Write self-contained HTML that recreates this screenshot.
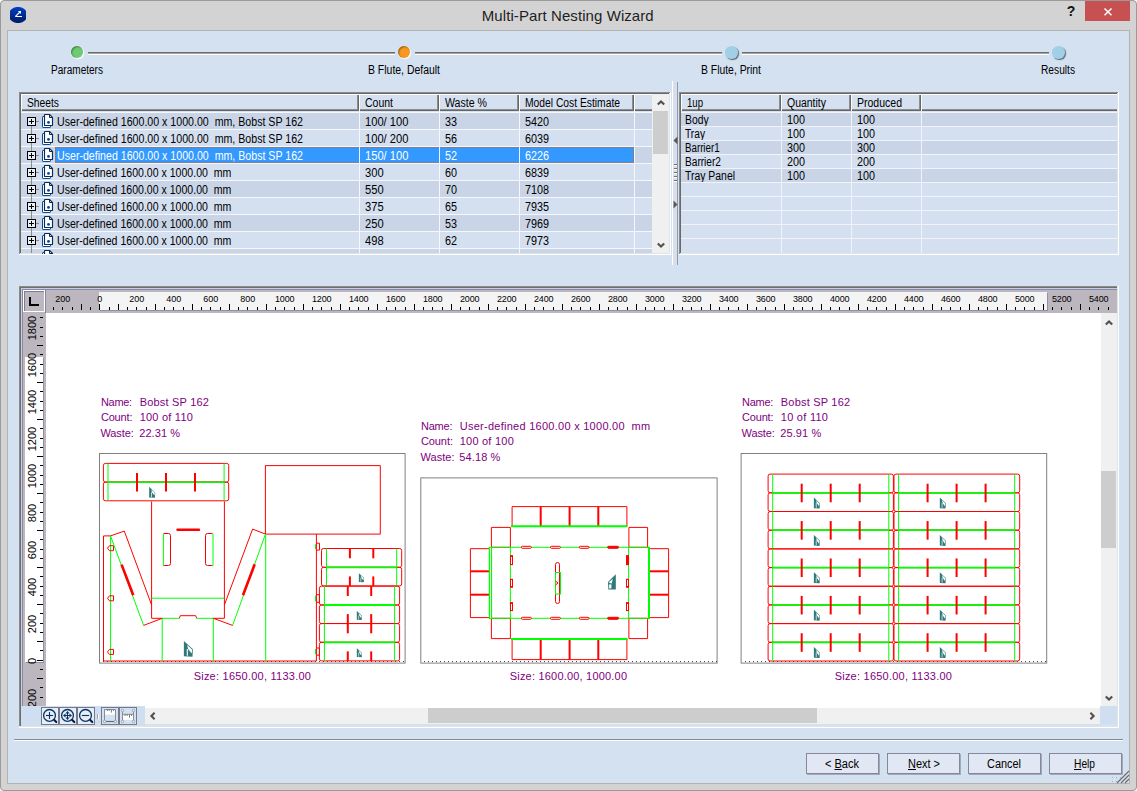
<!DOCTYPE html>
<html><head><meta charset="utf-8"><title>Multi-Part Nesting Wizard</title>
<style>
html,body{margin:0;padding:0}
body{width:1137px;height:791px;position:relative;overflow:hidden;background:#fff;font:11px 'Liberation Sans', sans-serif;}
div{box-sizing:border-box}
u{text-decoration:underline;text-underline-offset:1px}
svg{position:absolute;overflow:visible}
</style></head><body>
<div style="position:absolute;left:0;top:0;width:1137px;height:791px;background:#d3d3d3;border:1px solid #9a9a9a;border-radius:4px"></div>
<div style="position:absolute;left:7px;top:30px;width:1123px;height:754px;background:#b2b2b2;"></div>
<div style="position:absolute;left:8px;top:31px;width:1121px;height:752px;background:#D3E1F0;"></div>
<div style="position:absolute;left:481.80px;top:0.80px;font:normal 15px/30px 'Liberation Sans', sans-serif;color:#1e1e1e;white-space:pre;letter-spacing:0.078px;">Multi-Part Nesting Wizard</div>
<svg style="left:10px;top:7px;overflow:hidden" width="16" height="16" viewBox="0 0 16 16"><defs><linearGradient id="ig" x1="0" y1="0" x2="0" y2="1"><stop offset="0" stop-color="#0040c4"/><stop offset="1" stop-color="#001a66"/></linearGradient></defs><ellipse cx="8" cy="8" rx="9.3" ry="8.1" fill="url(#ig)"/><path d="M5.2 9.5 L12 9.5 M5.4 9.4 L10 5" stroke="#fff" stroke-width="1.1" fill="none"/><path d="M7.9 4.1 L11 3.9 L10.9 6.9 Z" fill="#fff"/></svg>
<div style="position:absolute;left:1066.72px;top:-2.65px;font:bold 14px/28px 'Liberation Sans', sans-serif;color:#111;white-space:pre;">?</div>
<div style="position:absolute;left:1085px;top:1px;width:45px;height:20px;background:#c75050;"></div>
<svg style="left:1104px;top:7.9px" width="8" height="8" viewBox="0 0 8 8"><path d="M0.5 0.5 L7.5 7.3 M7.5 0.5 L0.5 7.3" stroke="#fff" stroke-width="1.5" fill="none"/></svg>
<div style="position:absolute;left:71px;top:46px;width:12.2px;height:12.2px;border-radius:50%;background:#6dcb72;box-shadow:inset 1px 1px 1.5px rgba(0,0,0,.38), 1px 1px 1.5px rgba(255,255,255,1), 0 0 2px rgba(235,244,255,.9)"></div>
<div style="position:absolute;left:51.00px;top:57.84px;font:normal 12px/24px 'Liberation Sans', sans-serif;color:#000;white-space:pre;transform:scaleX(0.8383);transform-origin:0 0;">Parameters</div>
<div style="position:absolute;left:88px;top:52px;width:307px;height:1px;background:#6c6c6c;"></div>
<div style="position:absolute;left:88px;top:53px;width:307px;height:1px;background:#a4a4a4;"></div>
<div style="position:absolute;left:88px;top:54px;width:307px;height:1px;background:#ffffff;"></div>
<div style="position:absolute;left:398px;top:46px;width:12.2px;height:12.2px;border-radius:50%;background:#f8981f;box-shadow:inset 1px 1px 1.5px rgba(0,0,0,.38), 1px 1px 1.5px rgba(255,255,255,1), 0 0 2px rgba(235,244,255,.9)"></div>
<div style="position:absolute;left:368.00px;top:57.84px;font:normal 12px/24px 'Liberation Sans', sans-serif;color:#000;white-space:pre;transform:scaleX(0.8704);transform-origin:0 0;">B Flute, Default</div>
<div style="position:absolute;left:415px;top:52px;width:307px;height:1px;background:#6c6c6c;"></div>
<div style="position:absolute;left:415px;top:53px;width:307px;height:1px;background:#a4a4a4;"></div>
<div style="position:absolute;left:415px;top:54px;width:307px;height:1px;background:#ffffff;"></div>
<div style="position:absolute;left:725.2px;top:46.2px;width:12.4px;height:12.4px;border-radius:50%;background:#a0cfe6;box-shadow:1px 1px 1px rgba(50,60,70,.75), 0 0 2px rgba(225,238,250,.9)"></div>
<div style="position:absolute;left:701.00px;top:57.84px;font:normal 12px/24px 'Liberation Sans', sans-serif;color:#000;white-space:pre;transform:scaleX(0.8651);transform-origin:0 0;">B Flute, Print</div>
<div style="position:absolute;left:742px;top:52px;width:307px;height:1px;background:#6c6c6c;"></div>
<div style="position:absolute;left:742px;top:53px;width:307px;height:1px;background:#a4a4a4;"></div>
<div style="position:absolute;left:742px;top:54px;width:307px;height:1px;background:#ffffff;"></div>
<div style="position:absolute;left:1052.2px;top:46.2px;width:12.4px;height:12.4px;border-radius:50%;background:#a0cfe6;box-shadow:1px 1px 1px rgba(50,60,70,.75), 0 0 2px rgba(225,238,250,.9)"></div>
<div style="position:absolute;left:1041.00px;top:57.84px;font:normal 12px/24px 'Liberation Sans', sans-serif;color:#000;white-space:pre;transform:scaleX(0.8497);transform-origin:0 0;">Results</div>
<div style="position:absolute;left:19px;top:92px;width:652px;height:163px;background:#ffffff;"></div>
<div style="position:absolute;left:19px;top:92px;width:651px;height:162px;background:#8a8a8a;"></div>
<div style="position:absolute;left:20px;top:93px;width:650px;height:161px;background:#e3e3e3;"></div>
<div style="position:absolute;left:20px;top:93px;width:649px;height:160px;background:#696969;"></div>
<div style="position:absolute;left:21px;top:94px;width:648px;height:159px;background:#D3E1F0;"></div>
<div style="position:absolute;left:21px;top:94px;width:338px;height:17px;background:#ffffff;"></div>
<div style="position:absolute;left:22px;top:95px;width:337px;height:16px;background:#666666;"></div>
<div style="position:absolute;left:22px;top:95px;width:336px;height:15px;background:#8e8e8e;"></div>
<div style="position:absolute;left:22px;top:95px;width:335px;height:14px;background:#d5e0f0;"></div>
<div style="position:absolute;left:27.00px;top:90.84px;font:normal 12px/24px 'Liberation Sans', sans-serif;color:#000;white-space:pre;transform:scaleX(0.8565);transform-origin:0 0;">Sheets</div>
<div style="position:absolute;left:359px;top:94px;width:80px;height:17px;background:#ffffff;"></div>
<div style="position:absolute;left:360px;top:95px;width:79px;height:16px;background:#666666;"></div>
<div style="position:absolute;left:360px;top:95px;width:78px;height:15px;background:#8e8e8e;"></div>
<div style="position:absolute;left:360px;top:95px;width:77px;height:14px;background:#d5e0f0;"></div>
<div style="position:absolute;left:365.00px;top:90.84px;font:normal 12px/24px 'Liberation Sans', sans-serif;color:#000;white-space:pre;transform:scaleX(0.8741);transform-origin:0 0;">Count</div>
<div style="position:absolute;left:439px;top:94px;width:80px;height:17px;background:#ffffff;"></div>
<div style="position:absolute;left:440px;top:95px;width:79px;height:16px;background:#666666;"></div>
<div style="position:absolute;left:440px;top:95px;width:78px;height:15px;background:#8e8e8e;"></div>
<div style="position:absolute;left:440px;top:95px;width:77px;height:14px;background:#d5e0f0;"></div>
<div style="position:absolute;left:445.00px;top:90.84px;font:normal 12px/24px 'Liberation Sans', sans-serif;color:#000;white-space:pre;transform:scaleX(0.8828);transform-origin:0 0;">Waste %</div>
<div style="position:absolute;left:519px;top:94px;width:115px;height:17px;background:#ffffff;"></div>
<div style="position:absolute;left:520px;top:95px;width:114px;height:16px;background:#666666;"></div>
<div style="position:absolute;left:520px;top:95px;width:113px;height:15px;background:#8e8e8e;"></div>
<div style="position:absolute;left:520px;top:95px;width:112px;height:14px;background:#d5e0f0;"></div>
<div style="position:absolute;left:525.00px;top:90.84px;font:normal 12px/24px 'Liberation Sans', sans-serif;color:#000;white-space:pre;transform:scaleX(0.8580);transform-origin:0 0;">Model Cost Estimate</div>
<div style="position:absolute;left:634px;top:94px;width:18px;height:17px;background:#ffffff;"></div>
<div style="position:absolute;left:635px;top:95px;width:17px;height:16px;background:#666666;"></div>
<div style="position:absolute;left:635px;top:95px;width:17px;height:15px;background:#8e8e8e;"></div>
<div style="position:absolute;left:635px;top:95px;width:17px;height:14px;background:#d5e0f0;"></div>
<div style="position:absolute;left:21px;top:111px;width:631px;height:1px;background:#d8e2f1;"></div>
<div style="position:absolute;left:21px;top:112px;width:631px;height:17px;background:#c9d5e7;"></div>
<div style="position:absolute;left:21px;top:112px;width:631px;height:1px;background:#f4f7fb;"></div>
<div style="position:absolute;left:31px;top:117px;width:1px;height:12px;background:#8c8c8c;"></div>
<div style="position:absolute;left:36px;top:121px;width:3px;height:1px;background:#8c8c8c;"></div>
<div style="position:absolute;left:27px;top:117px;width:9px;height:9px;border:1px solid #000;background:#e9eef7"></div>
<div style="position:absolute;left:29px;top:121px;width:5px;height:1px;background:#000;"></div>
<div style="position:absolute;left:31px;top:119px;width:1px;height:5px;background:#000;"></div>
<svg style="left:42px;top:114px" width="11" height="14" viewBox="0 0 11 14"><path d="M0.5 3.1 Q0.5 2.5 1.1 2.5 L8.5 2.5 L8.5 12.9 Q8.5 13.5 7.9 13.5 L1.1 13.5 Q0.5 13.5 0.5 12.9 Z" fill="#fff" stroke="#0b4a8c" stroke-width="1"/><path d="M2.5 1.1 Q2.5 0.5 3.1 0.5 L7.6 0.5 L10.5 3.4 L10.5 10.9 Q10.5 11.5 9.9 11.5 L3.1 11.5 Q2.5 11.5 2.5 10.9 Z" fill="#fff" stroke="#0a2a5a" stroke-width="1.15"/><path d="M7.5 0.5 L7.5 3.5 L10.5 3.5" fill="none" stroke="#0a2a5a" stroke-width="1"/><circle cx="6.5" cy="8.4" r="1.45" fill="#0a4690"/></svg>
<div style="position:absolute;left:56.60px;top:109.84px;font:normal 12px/24px 'Liberation Sans', sans-serif;color:#000;white-space:pre;transform:scaleX(0.8850);transform-origin:0 0;">User-defined 1600.00 x 1000.00  mm, Bobst SP 162</div>
<div style="position:absolute;left:364.50px;top:109.84px;font:normal 12px/24px 'Liberation Sans', sans-serif;color:#000;white-space:pre;transform:scaleX(0.9300);transform-origin:0 0;">100/ 100</div>
<div style="position:absolute;left:444.50px;top:109.84px;font:normal 12px/24px 'Liberation Sans', sans-serif;color:#000;white-space:pre;transform:scaleX(0.9000);transform-origin:0 0;">33</div>
<div style="position:absolute;left:524.50px;top:109.84px;font:normal 12px/24px 'Liberation Sans', sans-serif;color:#000;white-space:pre;transform:scaleX(0.9000);transform-origin:0 0;">5420</div>
<div style="position:absolute;left:21px;top:129px;width:631px;height:17px;background:#d4dff0;"></div>
<div style="position:absolute;left:21px;top:129px;width:631px;height:1px;background:#f4f7fb;"></div>
<div style="position:absolute;left:31px;top:129px;width:1px;height:17px;background:#8c8c8c;"></div>
<div style="position:absolute;left:36px;top:138px;width:3px;height:1px;background:#8c8c8c;"></div>
<div style="position:absolute;left:27px;top:134px;width:9px;height:9px;border:1px solid #000;background:#e9eef7"></div>
<div style="position:absolute;left:29px;top:138px;width:5px;height:1px;background:#000;"></div>
<div style="position:absolute;left:31px;top:136px;width:1px;height:5px;background:#000;"></div>
<svg style="left:42px;top:131px" width="11" height="14" viewBox="0 0 11 14"><path d="M0.5 3.1 Q0.5 2.5 1.1 2.5 L8.5 2.5 L8.5 12.9 Q8.5 13.5 7.9 13.5 L1.1 13.5 Q0.5 13.5 0.5 12.9 Z" fill="#fff" stroke="#0b4a8c" stroke-width="1"/><path d="M2.5 1.1 Q2.5 0.5 3.1 0.5 L7.6 0.5 L10.5 3.4 L10.5 10.9 Q10.5 11.5 9.9 11.5 L3.1 11.5 Q2.5 11.5 2.5 10.9 Z" fill="#fff" stroke="#0a2a5a" stroke-width="1.15"/><path d="M7.5 0.5 L7.5 3.5 L10.5 3.5" fill="none" stroke="#0a2a5a" stroke-width="1"/><circle cx="6.5" cy="8.4" r="1.45" fill="#0a4690"/></svg>
<div style="position:absolute;left:56.60px;top:126.84px;font:normal 12px/24px 'Liberation Sans', sans-serif;color:#000;white-space:pre;transform:scaleX(0.8850);transform-origin:0 0;">User-defined 1600.00 x 1000.00  mm, Bobst SP 162</div>
<div style="position:absolute;left:364.50px;top:126.84px;font:normal 12px/24px 'Liberation Sans', sans-serif;color:#000;white-space:pre;transform:scaleX(0.9300);transform-origin:0 0;">100/ 200</div>
<div style="position:absolute;left:444.50px;top:126.84px;font:normal 12px/24px 'Liberation Sans', sans-serif;color:#000;white-space:pre;transform:scaleX(0.9000);transform-origin:0 0;">56</div>
<div style="position:absolute;left:524.50px;top:126.84px;font:normal 12px/24px 'Liberation Sans', sans-serif;color:#000;white-space:pre;transform:scaleX(0.9000);transform-origin:0 0;">6039</div>
<div style="position:absolute;left:21px;top:146px;width:631px;height:17px;background:#c9d5e7;"></div>
<div style="position:absolute;left:21px;top:146px;width:631px;height:1px;background:#f4f7fb;"></div>
<div style="position:absolute;left:31px;top:146px;width:1px;height:17px;background:#8c8c8c;"></div>
<div style="position:absolute;left:36px;top:155px;width:3px;height:1px;background:#8c8c8c;"></div>
<div style="position:absolute;left:27px;top:151px;width:9px;height:9px;border:1px solid #000;background:#e9eef7"></div>
<div style="position:absolute;left:29px;top:155px;width:5px;height:1px;background:#000;"></div>
<div style="position:absolute;left:31px;top:153px;width:1px;height:5px;background:#000;"></div>
<svg style="left:42px;top:148px" width="11" height="14" viewBox="0 0 11 14"><path d="M0.5 3.1 Q0.5 2.5 1.1 2.5 L8.5 2.5 L8.5 12.9 Q8.5 13.5 7.9 13.5 L1.1 13.5 Q0.5 13.5 0.5 12.9 Z" fill="#fff" stroke="#0b4a8c" stroke-width="1"/><path d="M2.5 1.1 Q2.5 0.5 3.1 0.5 L7.6 0.5 L10.5 3.4 L10.5 10.9 Q10.5 11.5 9.9 11.5 L3.1 11.5 Q2.5 11.5 2.5 10.9 Z" fill="#fff" stroke="#0a2a5a" stroke-width="1.15"/><path d="M7.5 0.5 L7.5 3.5 L10.5 3.5" fill="none" stroke="#0a2a5a" stroke-width="1"/><circle cx="6.5" cy="8.4" r="1.45" fill="#0a4690"/></svg>
<div style="position:absolute;left:55px;top:147px;width:579px;height:16px;background:#3399ff;outline:1px dotted #d0641a;outline-offset:-1px"></div>
<div style="position:absolute;left:56.60px;top:143.84px;font:normal 12px/24px 'Liberation Sans', sans-serif;color:#fff;white-space:pre;transform:scaleX(0.8850);transform-origin:0 0;">User-defined 1600.00 x 1000.00  mm, Bobst SP 162</div>
<div style="position:absolute;left:364.50px;top:143.84px;font:normal 12px/24px 'Liberation Sans', sans-serif;color:#fff;white-space:pre;transform:scaleX(0.9300);transform-origin:0 0;">150/ 100</div>
<div style="position:absolute;left:444.50px;top:143.84px;font:normal 12px/24px 'Liberation Sans', sans-serif;color:#fff;white-space:pre;transform:scaleX(0.9000);transform-origin:0 0;">52</div>
<div style="position:absolute;left:524.50px;top:143.84px;font:normal 12px/24px 'Liberation Sans', sans-serif;color:#fff;white-space:pre;transform:scaleX(0.9000);transform-origin:0 0;">6226</div>
<div style="position:absolute;left:21px;top:163px;width:631px;height:17px;background:#d4dff0;"></div>
<div style="position:absolute;left:21px;top:163px;width:631px;height:1px;background:#f4f7fb;"></div>
<div style="position:absolute;left:31px;top:163px;width:1px;height:17px;background:#8c8c8c;"></div>
<div style="position:absolute;left:36px;top:172px;width:3px;height:1px;background:#8c8c8c;"></div>
<div style="position:absolute;left:27px;top:168px;width:9px;height:9px;border:1px solid #000;background:#e9eef7"></div>
<div style="position:absolute;left:29px;top:172px;width:5px;height:1px;background:#000;"></div>
<div style="position:absolute;left:31px;top:170px;width:1px;height:5px;background:#000;"></div>
<svg style="left:42px;top:165px" width="11" height="14" viewBox="0 0 11 14"><path d="M0.5 3.1 Q0.5 2.5 1.1 2.5 L8.5 2.5 L8.5 12.9 Q8.5 13.5 7.9 13.5 L1.1 13.5 Q0.5 13.5 0.5 12.9 Z" fill="#fff" stroke="#0b4a8c" stroke-width="1"/><path d="M2.5 1.1 Q2.5 0.5 3.1 0.5 L7.6 0.5 L10.5 3.4 L10.5 10.9 Q10.5 11.5 9.9 11.5 L3.1 11.5 Q2.5 11.5 2.5 10.9 Z" fill="#fff" stroke="#0a2a5a" stroke-width="1.15"/><path d="M7.5 0.5 L7.5 3.5 L10.5 3.5" fill="none" stroke="#0a2a5a" stroke-width="1"/><circle cx="6.5" cy="8.4" r="1.45" fill="#0a4690"/></svg>
<div style="position:absolute;left:56.60px;top:160.84px;font:normal 12px/24px 'Liberation Sans', sans-serif;color:#000;white-space:pre;transform:scaleX(0.8803);transform-origin:0 0;">User-defined 1600.00 x 1000.00  mm</div>
<div style="position:absolute;left:364.50px;top:160.84px;font:normal 12px/24px 'Liberation Sans', sans-serif;color:#000;white-space:pre;transform:scaleX(0.9300);transform-origin:0 0;">300</div>
<div style="position:absolute;left:444.50px;top:160.84px;font:normal 12px/24px 'Liberation Sans', sans-serif;color:#000;white-space:pre;transform:scaleX(0.9000);transform-origin:0 0;">60</div>
<div style="position:absolute;left:524.50px;top:160.84px;font:normal 12px/24px 'Liberation Sans', sans-serif;color:#000;white-space:pre;transform:scaleX(0.9000);transform-origin:0 0;">6839</div>
<div style="position:absolute;left:21px;top:180px;width:631px;height:17px;background:#c9d5e7;"></div>
<div style="position:absolute;left:21px;top:180px;width:631px;height:1px;background:#f4f7fb;"></div>
<div style="position:absolute;left:31px;top:180px;width:1px;height:17px;background:#8c8c8c;"></div>
<div style="position:absolute;left:36px;top:189px;width:3px;height:1px;background:#8c8c8c;"></div>
<div style="position:absolute;left:27px;top:185px;width:9px;height:9px;border:1px solid #000;background:#e9eef7"></div>
<div style="position:absolute;left:29px;top:189px;width:5px;height:1px;background:#000;"></div>
<div style="position:absolute;left:31px;top:187px;width:1px;height:5px;background:#000;"></div>
<svg style="left:42px;top:182px" width="11" height="14" viewBox="0 0 11 14"><path d="M0.5 3.1 Q0.5 2.5 1.1 2.5 L8.5 2.5 L8.5 12.9 Q8.5 13.5 7.9 13.5 L1.1 13.5 Q0.5 13.5 0.5 12.9 Z" fill="#fff" stroke="#0b4a8c" stroke-width="1"/><path d="M2.5 1.1 Q2.5 0.5 3.1 0.5 L7.6 0.5 L10.5 3.4 L10.5 10.9 Q10.5 11.5 9.9 11.5 L3.1 11.5 Q2.5 11.5 2.5 10.9 Z" fill="#fff" stroke="#0a2a5a" stroke-width="1.15"/><path d="M7.5 0.5 L7.5 3.5 L10.5 3.5" fill="none" stroke="#0a2a5a" stroke-width="1"/><circle cx="6.5" cy="8.4" r="1.45" fill="#0a4690"/></svg>
<div style="position:absolute;left:56.60px;top:177.84px;font:normal 12px/24px 'Liberation Sans', sans-serif;color:#000;white-space:pre;transform:scaleX(0.8803);transform-origin:0 0;">User-defined 1600.00 x 1000.00  mm</div>
<div style="position:absolute;left:364.50px;top:177.84px;font:normal 12px/24px 'Liberation Sans', sans-serif;color:#000;white-space:pre;transform:scaleX(0.9300);transform-origin:0 0;">550</div>
<div style="position:absolute;left:444.50px;top:177.84px;font:normal 12px/24px 'Liberation Sans', sans-serif;color:#000;white-space:pre;transform:scaleX(0.9000);transform-origin:0 0;">70</div>
<div style="position:absolute;left:524.50px;top:177.84px;font:normal 12px/24px 'Liberation Sans', sans-serif;color:#000;white-space:pre;transform:scaleX(0.9000);transform-origin:0 0;">7108</div>
<div style="position:absolute;left:21px;top:197px;width:631px;height:17px;background:#d4dff0;"></div>
<div style="position:absolute;left:21px;top:197px;width:631px;height:1px;background:#f4f7fb;"></div>
<div style="position:absolute;left:31px;top:197px;width:1px;height:17px;background:#8c8c8c;"></div>
<div style="position:absolute;left:36px;top:206px;width:3px;height:1px;background:#8c8c8c;"></div>
<div style="position:absolute;left:27px;top:202px;width:9px;height:9px;border:1px solid #000;background:#e9eef7"></div>
<div style="position:absolute;left:29px;top:206px;width:5px;height:1px;background:#000;"></div>
<div style="position:absolute;left:31px;top:204px;width:1px;height:5px;background:#000;"></div>
<svg style="left:42px;top:199px" width="11" height="14" viewBox="0 0 11 14"><path d="M0.5 3.1 Q0.5 2.5 1.1 2.5 L8.5 2.5 L8.5 12.9 Q8.5 13.5 7.9 13.5 L1.1 13.5 Q0.5 13.5 0.5 12.9 Z" fill="#fff" stroke="#0b4a8c" stroke-width="1"/><path d="M2.5 1.1 Q2.5 0.5 3.1 0.5 L7.6 0.5 L10.5 3.4 L10.5 10.9 Q10.5 11.5 9.9 11.5 L3.1 11.5 Q2.5 11.5 2.5 10.9 Z" fill="#fff" stroke="#0a2a5a" stroke-width="1.15"/><path d="M7.5 0.5 L7.5 3.5 L10.5 3.5" fill="none" stroke="#0a2a5a" stroke-width="1"/><circle cx="6.5" cy="8.4" r="1.45" fill="#0a4690"/></svg>
<div style="position:absolute;left:56.60px;top:194.84px;font:normal 12px/24px 'Liberation Sans', sans-serif;color:#000;white-space:pre;transform:scaleX(0.8803);transform-origin:0 0;">User-defined 1600.00 x 1000.00  mm</div>
<div style="position:absolute;left:364.50px;top:194.84px;font:normal 12px/24px 'Liberation Sans', sans-serif;color:#000;white-space:pre;transform:scaleX(0.9300);transform-origin:0 0;">375</div>
<div style="position:absolute;left:444.50px;top:194.84px;font:normal 12px/24px 'Liberation Sans', sans-serif;color:#000;white-space:pre;transform:scaleX(0.9000);transform-origin:0 0;">65</div>
<div style="position:absolute;left:524.50px;top:194.84px;font:normal 12px/24px 'Liberation Sans', sans-serif;color:#000;white-space:pre;transform:scaleX(0.9000);transform-origin:0 0;">7935</div>
<div style="position:absolute;left:21px;top:214px;width:631px;height:17px;background:#c9d5e7;"></div>
<div style="position:absolute;left:21px;top:214px;width:631px;height:1px;background:#f4f7fb;"></div>
<div style="position:absolute;left:31px;top:214px;width:1px;height:17px;background:#8c8c8c;"></div>
<div style="position:absolute;left:36px;top:223px;width:3px;height:1px;background:#8c8c8c;"></div>
<div style="position:absolute;left:27px;top:219px;width:9px;height:9px;border:1px solid #000;background:#e9eef7"></div>
<div style="position:absolute;left:29px;top:223px;width:5px;height:1px;background:#000;"></div>
<div style="position:absolute;left:31px;top:221px;width:1px;height:5px;background:#000;"></div>
<svg style="left:42px;top:216px" width="11" height="14" viewBox="0 0 11 14"><path d="M0.5 3.1 Q0.5 2.5 1.1 2.5 L8.5 2.5 L8.5 12.9 Q8.5 13.5 7.9 13.5 L1.1 13.5 Q0.5 13.5 0.5 12.9 Z" fill="#fff" stroke="#0b4a8c" stroke-width="1"/><path d="M2.5 1.1 Q2.5 0.5 3.1 0.5 L7.6 0.5 L10.5 3.4 L10.5 10.9 Q10.5 11.5 9.9 11.5 L3.1 11.5 Q2.5 11.5 2.5 10.9 Z" fill="#fff" stroke="#0a2a5a" stroke-width="1.15"/><path d="M7.5 0.5 L7.5 3.5 L10.5 3.5" fill="none" stroke="#0a2a5a" stroke-width="1"/><circle cx="6.5" cy="8.4" r="1.45" fill="#0a4690"/></svg>
<div style="position:absolute;left:56.60px;top:211.84px;font:normal 12px/24px 'Liberation Sans', sans-serif;color:#000;white-space:pre;transform:scaleX(0.8803);transform-origin:0 0;">User-defined 1600.00 x 1000.00  mm</div>
<div style="position:absolute;left:364.50px;top:211.84px;font:normal 12px/24px 'Liberation Sans', sans-serif;color:#000;white-space:pre;transform:scaleX(0.9300);transform-origin:0 0;">250</div>
<div style="position:absolute;left:444.50px;top:211.84px;font:normal 12px/24px 'Liberation Sans', sans-serif;color:#000;white-space:pre;transform:scaleX(0.9000);transform-origin:0 0;">53</div>
<div style="position:absolute;left:524.50px;top:211.84px;font:normal 12px/24px 'Liberation Sans', sans-serif;color:#000;white-space:pre;transform:scaleX(0.9000);transform-origin:0 0;">7969</div>
<div style="position:absolute;left:21px;top:231px;width:631px;height:17px;background:#d4dff0;"></div>
<div style="position:absolute;left:21px;top:231px;width:631px;height:1px;background:#f4f7fb;"></div>
<div style="position:absolute;left:31px;top:231px;width:1px;height:17px;background:#8c8c8c;"></div>
<div style="position:absolute;left:36px;top:240px;width:3px;height:1px;background:#8c8c8c;"></div>
<div style="position:absolute;left:27px;top:236px;width:9px;height:9px;border:1px solid #000;background:#e9eef7"></div>
<div style="position:absolute;left:29px;top:240px;width:5px;height:1px;background:#000;"></div>
<div style="position:absolute;left:31px;top:238px;width:1px;height:5px;background:#000;"></div>
<svg style="left:42px;top:233px" width="11" height="14" viewBox="0 0 11 14"><path d="M0.5 3.1 Q0.5 2.5 1.1 2.5 L8.5 2.5 L8.5 12.9 Q8.5 13.5 7.9 13.5 L1.1 13.5 Q0.5 13.5 0.5 12.9 Z" fill="#fff" stroke="#0b4a8c" stroke-width="1"/><path d="M2.5 1.1 Q2.5 0.5 3.1 0.5 L7.6 0.5 L10.5 3.4 L10.5 10.9 Q10.5 11.5 9.9 11.5 L3.1 11.5 Q2.5 11.5 2.5 10.9 Z" fill="#fff" stroke="#0a2a5a" stroke-width="1.15"/><path d="M7.5 0.5 L7.5 3.5 L10.5 3.5" fill="none" stroke="#0a2a5a" stroke-width="1"/><circle cx="6.5" cy="8.4" r="1.45" fill="#0a4690"/></svg>
<div style="position:absolute;left:56.60px;top:228.84px;font:normal 12px/24px 'Liberation Sans', sans-serif;color:#000;white-space:pre;transform:scaleX(0.8803);transform-origin:0 0;">User-defined 1600.00 x 1000.00  mm</div>
<div style="position:absolute;left:364.50px;top:228.84px;font:normal 12px/24px 'Liberation Sans', sans-serif;color:#000;white-space:pre;transform:scaleX(0.9300);transform-origin:0 0;">498</div>
<div style="position:absolute;left:444.50px;top:228.84px;font:normal 12px/24px 'Liberation Sans', sans-serif;color:#000;white-space:pre;transform:scaleX(0.9000);transform-origin:0 0;">62</div>
<div style="position:absolute;left:524.50px;top:228.84px;font:normal 12px/24px 'Liberation Sans', sans-serif;color:#000;white-space:pre;transform:scaleX(0.9000);transform-origin:0 0;">7973</div>
<div style="position:absolute;left:21px;top:248px;width:631px;height:5px;background:#c9d5e7;"></div>
<div style="position:absolute;left:21px;top:248px;width:631px;height:1px;background:#f4f7fb;"></div>
<div style="position:absolute;left:31px;top:248px;width:1px;height:5px;background:#8c8c8c;"></div>
<div style="position:absolute;left:42px;top:250px;width:11px;height:4px;overflow:hidden"><svg style="left:0px;top:0px" width="11" height="14" viewBox="0 0 11 14"><path d="M0.5 3.1 Q0.5 2.5 1.1 2.5 L8.5 2.5 L8.5 12.9 Q8.5 13.5 7.9 13.5 L1.1 13.5 Q0.5 13.5 0.5 12.9 Z" fill="#fff" stroke="#0b4a8c" stroke-width="1"/><path d="M2.5 1.1 Q2.5 0.5 3.1 0.5 L7.6 0.5 L10.5 3.4 L10.5 10.9 Q10.5 11.5 9.9 11.5 L3.1 11.5 Q2.5 11.5 2.5 10.9 Z" fill="#fff" stroke="#0a2a5a" stroke-width="1.15"/><path d="M7.5 0.5 L7.5 3.5 L10.5 3.5" fill="none" stroke="#0a2a5a" stroke-width="1"/><circle cx="6.5" cy="8.4" r="1.45" fill="#0a4690"/></svg></div>
<div style="position:absolute;left:359px;top:111px;width:1px;height:142px;background:#f4f7fb;"></div>
<div style="position:absolute;left:439px;top:111px;width:1px;height:142px;background:#f4f7fb;"></div>
<div style="position:absolute;left:519px;top:111px;width:1px;height:142px;background:#f4f7fb;"></div>
<div style="position:absolute;left:634px;top:111px;width:1px;height:142px;background:#f4f7fb;"></div>
<div style="position:absolute;left:652px;top:94px;width:17px;height:159px;background:#f0f0f0;"></div>
<div style="position:absolute;left:653px;top:111px;width:15px;height:43px;background:#cdcdcd;"></div>
<svg style="left:655.5px;top:98.1px" width="10" height="10" viewBox="-5 -5 10 10"><path d="M-3.2 -1.6 L0 1.6 L3.2 -1.6" transform="rotate(180)" stroke="#505050" stroke-width="2.1" fill="none"/></svg>
<svg style="left:655.5px;top:239.8px" width="10" height="10" viewBox="-5 -5 10 10"><path d="M-3.2 -1.6 L0 1.6 L3.2 -1.6" transform="rotate(0)" stroke="#505050" stroke-width="2.1" fill="none"/></svg>
<div style="position:absolute;left:672px;top:81px;width:1px;height:184px;background:#ffffff;"></div>
<div style="position:absolute;left:673px;top:82px;width:4px;height:183px;background:#d8deec;"></div>
<div style="position:absolute;left:677px;top:82px;width:1px;height:183px;background:#8e9ab0;"></div>
<svg style="left:673px;top:135.5px" width="5" height="9" viewBox="0 0 5 9"><path d="M4.5 0.5 L0.5 4.5 L4.5 8.5 Z" fill="#5a5a5a"/></svg>
<svg style="left:673px;top:199.5px" width="5" height="9" viewBox="0 0 5 9"><path d="M0.5 0.5 L4.5 4.5 L0.5 8.5 Z" fill="#5a5a5a"/></svg>
<div style="position:absolute;left:674px;top:164px;width:3px;height:1px;background:#6e6e6e;"></div>
<div style="position:absolute;left:674px;top:165px;width:3px;height:1px;background:#ffffff;"></div>
<div style="position:absolute;left:674px;top:168px;width:3px;height:1px;background:#6e6e6e;"></div>
<div style="position:absolute;left:674px;top:169px;width:3px;height:1px;background:#ffffff;"></div>
<div style="position:absolute;left:674px;top:172px;width:3px;height:1px;background:#6e6e6e;"></div>
<div style="position:absolute;left:674px;top:173px;width:3px;height:1px;background:#ffffff;"></div>
<div style="position:absolute;left:674px;top:176px;width:3px;height:1px;background:#6e6e6e;"></div>
<div style="position:absolute;left:674px;top:177px;width:3px;height:1px;background:#ffffff;"></div>
<div style="position:absolute;left:674px;top:180px;width:3px;height:1px;background:#6e6e6e;"></div>
<div style="position:absolute;left:674px;top:181px;width:3px;height:1px;background:#ffffff;"></div>
<div style="position:absolute;left:679px;top:92px;width:440px;height:163px;background:#ffffff;"></div>
<div style="position:absolute;left:679px;top:92px;width:439px;height:162px;background:#8a8a8a;"></div>
<div style="position:absolute;left:680px;top:93px;width:438px;height:161px;background:#e3e3e3;"></div>
<div style="position:absolute;left:680px;top:93px;width:437px;height:160px;background:#696969;"></div>
<div style="position:absolute;left:681px;top:94px;width:436px;height:159px;background:#D3E1F0;"></div>
<div style="position:absolute;left:681px;top:94px;width:100px;height:17px;background:#ffffff;"></div>
<div style="position:absolute;left:682px;top:95px;width:99px;height:16px;background:#666666;"></div>
<div style="position:absolute;left:682px;top:95px;width:98px;height:15px;background:#8e8e8e;"></div>
<div style="position:absolute;left:682px;top:95px;width:97px;height:14px;background:#d5e0f0;"></div>
<div style="position:absolute;left:687.00px;top:90.84px;font:normal 12px/24px 'Liberation Sans', sans-serif;color:#000;white-space:pre;transform:scaleX(0.7988);transform-origin:0 0;">1up</div>
<div style="position:absolute;left:781px;top:94px;width:70px;height:17px;background:#ffffff;"></div>
<div style="position:absolute;left:782px;top:95px;width:69px;height:16px;background:#666666;"></div>
<div style="position:absolute;left:782px;top:95px;width:68px;height:15px;background:#8e8e8e;"></div>
<div style="position:absolute;left:782px;top:95px;width:67px;height:14px;background:#d5e0f0;"></div>
<div style="position:absolute;left:787.00px;top:90.84px;font:normal 12px/24px 'Liberation Sans', sans-serif;color:#000;white-space:pre;transform:scaleX(0.8724);transform-origin:0 0;">Quantity</div>
<div style="position:absolute;left:851px;top:94px;width:70px;height:17px;background:#ffffff;"></div>
<div style="position:absolute;left:852px;top:95px;width:69px;height:16px;background:#666666;"></div>
<div style="position:absolute;left:852px;top:95px;width:68px;height:15px;background:#8e8e8e;"></div>
<div style="position:absolute;left:852px;top:95px;width:67px;height:14px;background:#d5e0f0;"></div>
<div style="position:absolute;left:857.00px;top:90.84px;font:normal 12px/24px 'Liberation Sans', sans-serif;color:#000;white-space:pre;transform:scaleX(0.8759);transform-origin:0 0;">Produced</div>
<div style="position:absolute;left:921px;top:94px;width:196px;height:17px;background:#ffffff;"></div>
<div style="position:absolute;left:922px;top:95px;width:195px;height:16px;background:#666666;"></div>
<div style="position:absolute;left:922px;top:95px;width:195px;height:15px;background:#8e8e8e;"></div>
<div style="position:absolute;left:922px;top:95px;width:195px;height:14px;background:#d5e0f0;"></div>
<div style="position:absolute;left:681px;top:111px;width:436px;height:1px;background:#d8e2f1;"></div>
<div style="position:absolute;left:681px;top:113px;width:436px;height:13px;background:#c9d5e7;"></div>
<div style="position:absolute;left:681px;top:112px;width:436px;height:1px;background:#f0f4fa;"></div>
<div style="position:absolute;left:685.00px;top:108.34px;font:normal 12px/24px 'Liberation Sans', sans-serif;color:#000;white-space:pre;transform:scaleX(0.8626);transform-origin:0 0;">Body</div>
<div style="position:absolute;left:787.00px;top:108.34px;font:normal 12px/24px 'Liberation Sans', sans-serif;color:#000;white-space:pre;transform:scaleX(0.9000);transform-origin:0 0;">100</div>
<div style="position:absolute;left:857.00px;top:108.34px;font:normal 12px/24px 'Liberation Sans', sans-serif;color:#000;white-space:pre;transform:scaleX(0.9000);transform-origin:0 0;">100</div>
<div style="position:absolute;left:681px;top:127px;width:436px;height:13px;background:#d4dff0;"></div>
<div style="position:absolute;left:681px;top:126px;width:436px;height:1px;background:#f0f4fa;"></div>
<div style="position:absolute;left:685.00px;top:122.34px;font:normal 12px/24px 'Liberation Sans', sans-serif;color:#000;white-space:pre;transform:scaleX(0.8488);transform-origin:0 0;">Tray</div>
<div style="position:absolute;left:787.00px;top:122.34px;font:normal 12px/24px 'Liberation Sans', sans-serif;color:#000;white-space:pre;transform:scaleX(0.9000);transform-origin:0 0;">100</div>
<div style="position:absolute;left:857.00px;top:122.34px;font:normal 12px/24px 'Liberation Sans', sans-serif;color:#000;white-space:pre;transform:scaleX(0.9000);transform-origin:0 0;">100</div>
<div style="position:absolute;left:681px;top:141px;width:436px;height:13px;background:#c9d5e7;"></div>
<div style="position:absolute;left:681px;top:140px;width:436px;height:1px;background:#f0f4fa;"></div>
<div style="position:absolute;left:685.00px;top:136.34px;font:normal 12px/24px 'Liberation Sans', sans-serif;color:#000;white-space:pre;transform:scaleX(0.8105);transform-origin:0 0;">Barrier1</div>
<div style="position:absolute;left:787.00px;top:136.34px;font:normal 12px/24px 'Liberation Sans', sans-serif;color:#000;white-space:pre;transform:scaleX(0.9000);transform-origin:0 0;">300</div>
<div style="position:absolute;left:857.00px;top:136.34px;font:normal 12px/24px 'Liberation Sans', sans-serif;color:#000;white-space:pre;transform:scaleX(0.9000);transform-origin:0 0;">300</div>
<div style="position:absolute;left:681px;top:155px;width:436px;height:13px;background:#d4dff0;"></div>
<div style="position:absolute;left:681px;top:154px;width:436px;height:1px;background:#f0f4fa;"></div>
<div style="position:absolute;left:685.00px;top:150.34px;font:normal 12px/24px 'Liberation Sans', sans-serif;color:#000;white-space:pre;transform:scaleX(0.8433);transform-origin:0 0;">Barrier2</div>
<div style="position:absolute;left:787.00px;top:150.34px;font:normal 12px/24px 'Liberation Sans', sans-serif;color:#000;white-space:pre;transform:scaleX(0.9000);transform-origin:0 0;">200</div>
<div style="position:absolute;left:857.00px;top:150.34px;font:normal 12px/24px 'Liberation Sans', sans-serif;color:#000;white-space:pre;transform:scaleX(0.9000);transform-origin:0 0;">200</div>
<div style="position:absolute;left:681px;top:169px;width:436px;height:13px;background:#c9d5e7;"></div>
<div style="position:absolute;left:681px;top:168px;width:436px;height:1px;background:#f0f4fa;"></div>
<div style="position:absolute;left:685.00px;top:164.34px;font:normal 12px/24px 'Liberation Sans', sans-serif;color:#000;white-space:pre;transform:scaleX(0.8681);transform-origin:0 0;">Tray Panel</div>
<div style="position:absolute;left:787.00px;top:164.34px;font:normal 12px/24px 'Liberation Sans', sans-serif;color:#000;white-space:pre;transform:scaleX(0.9000);transform-origin:0 0;">100</div>
<div style="position:absolute;left:857.00px;top:164.34px;font:normal 12px/24px 'Liberation Sans', sans-serif;color:#000;white-space:pre;transform:scaleX(0.9000);transform-origin:0 0;">100</div>
<div style="position:absolute;left:681px;top:183px;width:436px;height:13px;background:#d4dff0;"></div>
<div style="position:absolute;left:681px;top:182px;width:436px;height:1px;background:#f0f4fa;"></div>
<div style="position:absolute;left:681px;top:197px;width:436px;height:13px;background:#d4dff0;"></div>
<div style="position:absolute;left:681px;top:196px;width:436px;height:1px;background:#f0f4fa;"></div>
<div style="position:absolute;left:681px;top:211px;width:436px;height:13px;background:#d4dff0;"></div>
<div style="position:absolute;left:681px;top:210px;width:436px;height:1px;background:#f0f4fa;"></div>
<div style="position:absolute;left:681px;top:225px;width:436px;height:13px;background:#d4dff0;"></div>
<div style="position:absolute;left:681px;top:224px;width:436px;height:1px;background:#f0f4fa;"></div>
<div style="position:absolute;left:681px;top:239px;width:436px;height:13px;background:#d4dff0;"></div>
<div style="position:absolute;left:681px;top:238px;width:436px;height:1px;background:#f0f4fa;"></div>
<div style="position:absolute;left:781px;top:112px;width:1px;height:141px;background:#f0f4fa;"></div>
<div style="position:absolute;left:851px;top:112px;width:1px;height:141px;background:#f0f4fa;"></div>
<div style="position:absolute;left:921px;top:112px;width:1px;height:141px;background:#f0f4fa;"></div>
<div style="position:absolute;left:19px;top:286px;width:1100px;height:442px;background:#ffffff;"></div>
<div style="position:absolute;left:19px;top:286px;width:1099px;height:441px;background:#e3e3e3;"></div>
<div style="position:absolute;left:19px;top:286px;width:1098px;height:440px;background:#8a8a8a;"></div>
<div style="position:absolute;left:20px;top:287px;width:1097px;height:439px;background:#6e6e6e;"></div>
<div style="position:absolute;left:21px;top:288px;width:1096px;height:438px;background:#c8cce4;"></div>
<div style="position:absolute;left:22px;top:289px;width:1095px;height:437px;background:#8688a4;"></div>
<div style="position:absolute;left:23px;top:290px;width:1094px;height:436px;background:#ffffff;"></div>
<div style="position:absolute;left:23px;top:290px;width:1094px;height:23px;background:#bcb6be;"></div>
<div style="position:absolute;left:99px;top:292px;width:948px;height:18px;background:#f4f4f4;box-shadow:1px 1px 0 #8f90a8"></div>
<div style="position:absolute;left:23px;top:313px;width:23px;height:393px;background:#bcb6be;"></div>
<div style="position:absolute;left:25px;top:357px;width:18px;height:305px;background:#ffffff;box-shadow:1px 1px 0 #8f90a8"></div>
<div style="position:absolute;left:23px;top:290px;width:22px;height:22px;background:#ffffff;"></div>
<div style="position:absolute;left:24px;top:291px;width:20px;height:20px;background:#7c7e98;"></div>
<div style="position:absolute;left:25px;top:292px;width:19px;height:19px;background:#bdb7bf;"></div>
<div style="position:absolute;left:45px;top:290px;width:1px;height:23px;background:#8688a4;"></div>
<div style="position:absolute;left:29px;top:297px;width:2px;height:9px;background:#000;"></div>
<div style="position:absolute;left:29px;top:304px;width:10px;height:2px;background:#000;"></div>
<div style="position:absolute;left:53px;top:307px;width:1px;height:3px;background:#000;"></div>
<div style="position:absolute;left:62px;top:307px;width:1px;height:3px;background:#000;"></div>
<div style="position:absolute;left:55.33px;top:289.88px;font:normal 9px/18px 'Liberation Sans', sans-serif;color:#000;white-space:pre;letter-spacing:-0.100px;">200</div>
<div style="position:absolute;left:72px;top:307px;width:1px;height:3px;background:#000;"></div>
<div style="position:absolute;left:81px;top:304px;width:1px;height:6px;background:#000;"></div>
<div style="position:absolute;left:90px;top:307px;width:1px;height:3px;background:#000;"></div>
<div style="position:absolute;left:99px;top:304px;width:1px;height:6px;background:#000;"></div>
<div style="position:absolute;left:97.24px;top:289.88px;font:normal 9px/18px 'Liberation Sans', sans-serif;color:#000;white-space:pre;letter-spacing:-0.100px;">0</div>
<div style="position:absolute;left:109px;top:307px;width:1px;height:3px;background:#000;"></div>
<div style="position:absolute;left:118px;top:304px;width:1px;height:6px;background:#000;"></div>
<div style="position:absolute;left:127px;top:307px;width:1px;height:3px;background:#000;"></div>
<div style="position:absolute;left:136px;top:307px;width:1px;height:3px;background:#000;"></div>
<div style="position:absolute;left:129.33px;top:289.88px;font:normal 9px/18px 'Liberation Sans', sans-serif;color:#000;white-space:pre;letter-spacing:-0.100px;">200</div>
<div style="position:absolute;left:146px;top:307px;width:1px;height:3px;background:#000;"></div>
<div style="position:absolute;left:155px;top:304px;width:1px;height:6px;background:#000;"></div>
<div style="position:absolute;left:164px;top:307px;width:1px;height:3px;background:#000;"></div>
<div style="position:absolute;left:173px;top:307px;width:1px;height:3px;background:#000;"></div>
<div style="position:absolute;left:166.33px;top:289.88px;font:normal 9px/18px 'Liberation Sans', sans-serif;color:#000;white-space:pre;letter-spacing:-0.100px;">400</div>
<div style="position:absolute;left:183px;top:307px;width:1px;height:3px;background:#000;"></div>
<div style="position:absolute;left:192px;top:304px;width:1px;height:6px;background:#000;"></div>
<div style="position:absolute;left:201px;top:307px;width:1px;height:3px;background:#000;"></div>
<div style="position:absolute;left:210px;top:307px;width:1px;height:3px;background:#000;"></div>
<div style="position:absolute;left:203.33px;top:289.88px;font:normal 9px/18px 'Liberation Sans', sans-serif;color:#000;white-space:pre;letter-spacing:-0.100px;">600</div>
<div style="position:absolute;left:220px;top:307px;width:1px;height:3px;background:#000;"></div>
<div style="position:absolute;left:229px;top:304px;width:1px;height:6px;background:#000;"></div>
<div style="position:absolute;left:238px;top:307px;width:1px;height:3px;background:#000;"></div>
<div style="position:absolute;left:247px;top:307px;width:1px;height:3px;background:#000;"></div>
<div style="position:absolute;left:240.33px;top:289.88px;font:normal 9px/18px 'Liberation Sans', sans-serif;color:#000;white-space:pre;letter-spacing:-0.100px;">800</div>
<div style="position:absolute;left:257px;top:307px;width:1px;height:3px;background:#000;"></div>
<div style="position:absolute;left:266px;top:304px;width:1px;height:6px;background:#000;"></div>
<div style="position:absolute;left:275px;top:307px;width:1px;height:3px;background:#000;"></div>
<div style="position:absolute;left:284px;top:307px;width:1px;height:3px;background:#000;"></div>
<div style="position:absolute;left:274.88px;top:289.88px;font:normal 9px/18px 'Liberation Sans', sans-serif;color:#000;white-space:pre;letter-spacing:-0.100px;">1000</div>
<div style="position:absolute;left:294px;top:307px;width:1px;height:3px;background:#000;"></div>
<div style="position:absolute;left:303px;top:304px;width:1px;height:6px;background:#000;"></div>
<div style="position:absolute;left:312px;top:307px;width:1px;height:3px;background:#000;"></div>
<div style="position:absolute;left:321px;top:307px;width:1px;height:3px;background:#000;"></div>
<div style="position:absolute;left:311.88px;top:289.88px;font:normal 9px/18px 'Liberation Sans', sans-serif;color:#000;white-space:pre;letter-spacing:-0.100px;">1200</div>
<div style="position:absolute;left:331px;top:307px;width:1px;height:3px;background:#000;"></div>
<div style="position:absolute;left:340px;top:304px;width:1px;height:6px;background:#000;"></div>
<div style="position:absolute;left:349px;top:307px;width:1px;height:3px;background:#000;"></div>
<div style="position:absolute;left:358px;top:307px;width:1px;height:3px;background:#000;"></div>
<div style="position:absolute;left:348.88px;top:289.88px;font:normal 9px/18px 'Liberation Sans', sans-serif;color:#000;white-space:pre;letter-spacing:-0.100px;">1400</div>
<div style="position:absolute;left:368px;top:307px;width:1px;height:3px;background:#000;"></div>
<div style="position:absolute;left:377px;top:304px;width:1px;height:6px;background:#000;"></div>
<div style="position:absolute;left:386px;top:307px;width:1px;height:3px;background:#000;"></div>
<div style="position:absolute;left:395px;top:307px;width:1px;height:3px;background:#000;"></div>
<div style="position:absolute;left:385.88px;top:289.88px;font:normal 9px/18px 'Liberation Sans', sans-serif;color:#000;white-space:pre;letter-spacing:-0.100px;">1600</div>
<div style="position:absolute;left:405px;top:307px;width:1px;height:3px;background:#000;"></div>
<div style="position:absolute;left:414px;top:304px;width:1px;height:6px;background:#000;"></div>
<div style="position:absolute;left:423px;top:307px;width:1px;height:3px;background:#000;"></div>
<div style="position:absolute;left:432px;top:307px;width:1px;height:3px;background:#000;"></div>
<div style="position:absolute;left:422.88px;top:289.88px;font:normal 9px/18px 'Liberation Sans', sans-serif;color:#000;white-space:pre;letter-spacing:-0.100px;">1800</div>
<div style="position:absolute;left:442px;top:307px;width:1px;height:3px;background:#000;"></div>
<div style="position:absolute;left:451px;top:304px;width:1px;height:6px;background:#000;"></div>
<div style="position:absolute;left:460px;top:307px;width:1px;height:3px;background:#000;"></div>
<div style="position:absolute;left:469px;top:307px;width:1px;height:3px;background:#000;"></div>
<div style="position:absolute;left:459.88px;top:289.88px;font:normal 9px/18px 'Liberation Sans', sans-serif;color:#000;white-space:pre;letter-spacing:-0.100px;">2000</div>
<div style="position:absolute;left:479px;top:307px;width:1px;height:3px;background:#000;"></div>
<div style="position:absolute;left:488px;top:304px;width:1px;height:6px;background:#000;"></div>
<div style="position:absolute;left:497px;top:307px;width:1px;height:3px;background:#000;"></div>
<div style="position:absolute;left:506px;top:307px;width:1px;height:3px;background:#000;"></div>
<div style="position:absolute;left:496.88px;top:289.88px;font:normal 9px/18px 'Liberation Sans', sans-serif;color:#000;white-space:pre;letter-spacing:-0.100px;">2200</div>
<div style="position:absolute;left:516px;top:307px;width:1px;height:3px;background:#000;"></div>
<div style="position:absolute;left:525px;top:304px;width:1px;height:6px;background:#000;"></div>
<div style="position:absolute;left:534px;top:307px;width:1px;height:3px;background:#000;"></div>
<div style="position:absolute;left:543px;top:307px;width:1px;height:3px;background:#000;"></div>
<div style="position:absolute;left:533.88px;top:289.88px;font:normal 9px/18px 'Liberation Sans', sans-serif;color:#000;white-space:pre;letter-spacing:-0.100px;">2400</div>
<div style="position:absolute;left:553px;top:307px;width:1px;height:3px;background:#000;"></div>
<div style="position:absolute;left:562px;top:304px;width:1px;height:6px;background:#000;"></div>
<div style="position:absolute;left:571px;top:307px;width:1px;height:3px;background:#000;"></div>
<div style="position:absolute;left:580px;top:307px;width:1px;height:3px;background:#000;"></div>
<div style="position:absolute;left:570.88px;top:289.88px;font:normal 9px/18px 'Liberation Sans', sans-serif;color:#000;white-space:pre;letter-spacing:-0.100px;">2600</div>
<div style="position:absolute;left:590px;top:307px;width:1px;height:3px;background:#000;"></div>
<div style="position:absolute;left:599px;top:304px;width:1px;height:6px;background:#000;"></div>
<div style="position:absolute;left:608px;top:307px;width:1px;height:3px;background:#000;"></div>
<div style="position:absolute;left:617px;top:307px;width:1px;height:3px;background:#000;"></div>
<div style="position:absolute;left:607.88px;top:289.88px;font:normal 9px/18px 'Liberation Sans', sans-serif;color:#000;white-space:pre;letter-spacing:-0.100px;">2800</div>
<div style="position:absolute;left:627px;top:307px;width:1px;height:3px;background:#000;"></div>
<div style="position:absolute;left:636px;top:304px;width:1px;height:6px;background:#000;"></div>
<div style="position:absolute;left:645px;top:307px;width:1px;height:3px;background:#000;"></div>
<div style="position:absolute;left:654px;top:307px;width:1px;height:3px;background:#000;"></div>
<div style="position:absolute;left:644.88px;top:289.88px;font:normal 9px/18px 'Liberation Sans', sans-serif;color:#000;white-space:pre;letter-spacing:-0.100px;">3000</div>
<div style="position:absolute;left:664px;top:307px;width:1px;height:3px;background:#000;"></div>
<div style="position:absolute;left:673px;top:304px;width:1px;height:6px;background:#000;"></div>
<div style="position:absolute;left:682px;top:307px;width:1px;height:3px;background:#000;"></div>
<div style="position:absolute;left:691px;top:307px;width:1px;height:3px;background:#000;"></div>
<div style="position:absolute;left:681.88px;top:289.88px;font:normal 9px/18px 'Liberation Sans', sans-serif;color:#000;white-space:pre;letter-spacing:-0.100px;">3200</div>
<div style="position:absolute;left:701px;top:307px;width:1px;height:3px;background:#000;"></div>
<div style="position:absolute;left:710px;top:304px;width:1px;height:6px;background:#000;"></div>
<div style="position:absolute;left:719px;top:307px;width:1px;height:3px;background:#000;"></div>
<div style="position:absolute;left:728px;top:307px;width:1px;height:3px;background:#000;"></div>
<div style="position:absolute;left:718.88px;top:289.88px;font:normal 9px/18px 'Liberation Sans', sans-serif;color:#000;white-space:pre;letter-spacing:-0.100px;">3400</div>
<div style="position:absolute;left:738px;top:307px;width:1px;height:3px;background:#000;"></div>
<div style="position:absolute;left:747px;top:304px;width:1px;height:6px;background:#000;"></div>
<div style="position:absolute;left:756px;top:307px;width:1px;height:3px;background:#000;"></div>
<div style="position:absolute;left:765px;top:307px;width:1px;height:3px;background:#000;"></div>
<div style="position:absolute;left:755.88px;top:289.88px;font:normal 9px/18px 'Liberation Sans', sans-serif;color:#000;white-space:pre;letter-spacing:-0.100px;">3600</div>
<div style="position:absolute;left:775px;top:307px;width:1px;height:3px;background:#000;"></div>
<div style="position:absolute;left:784px;top:304px;width:1px;height:6px;background:#000;"></div>
<div style="position:absolute;left:793px;top:307px;width:1px;height:3px;background:#000;"></div>
<div style="position:absolute;left:802px;top:307px;width:1px;height:3px;background:#000;"></div>
<div style="position:absolute;left:792.88px;top:289.88px;font:normal 9px/18px 'Liberation Sans', sans-serif;color:#000;white-space:pre;letter-spacing:-0.100px;">3800</div>
<div style="position:absolute;left:812px;top:307px;width:1px;height:3px;background:#000;"></div>
<div style="position:absolute;left:821px;top:304px;width:1px;height:6px;background:#000;"></div>
<div style="position:absolute;left:830px;top:307px;width:1px;height:3px;background:#000;"></div>
<div style="position:absolute;left:839px;top:307px;width:1px;height:3px;background:#000;"></div>
<div style="position:absolute;left:829.88px;top:289.88px;font:normal 9px/18px 'Liberation Sans', sans-serif;color:#000;white-space:pre;letter-spacing:-0.100px;">4000</div>
<div style="position:absolute;left:849px;top:307px;width:1px;height:3px;background:#000;"></div>
<div style="position:absolute;left:858px;top:304px;width:1px;height:6px;background:#000;"></div>
<div style="position:absolute;left:867px;top:307px;width:1px;height:3px;background:#000;"></div>
<div style="position:absolute;left:876px;top:307px;width:1px;height:3px;background:#000;"></div>
<div style="position:absolute;left:866.88px;top:289.88px;font:normal 9px/18px 'Liberation Sans', sans-serif;color:#000;white-space:pre;letter-spacing:-0.100px;">4200</div>
<div style="position:absolute;left:886px;top:307px;width:1px;height:3px;background:#000;"></div>
<div style="position:absolute;left:895px;top:304px;width:1px;height:6px;background:#000;"></div>
<div style="position:absolute;left:904px;top:307px;width:1px;height:3px;background:#000;"></div>
<div style="position:absolute;left:913px;top:307px;width:1px;height:3px;background:#000;"></div>
<div style="position:absolute;left:903.88px;top:289.88px;font:normal 9px/18px 'Liberation Sans', sans-serif;color:#000;white-space:pre;letter-spacing:-0.100px;">4400</div>
<div style="position:absolute;left:923px;top:307px;width:1px;height:3px;background:#000;"></div>
<div style="position:absolute;left:932px;top:304px;width:1px;height:6px;background:#000;"></div>
<div style="position:absolute;left:941px;top:307px;width:1px;height:3px;background:#000;"></div>
<div style="position:absolute;left:950px;top:307px;width:1px;height:3px;background:#000;"></div>
<div style="position:absolute;left:940.88px;top:289.88px;font:normal 9px/18px 'Liberation Sans', sans-serif;color:#000;white-space:pre;letter-spacing:-0.100px;">4600</div>
<div style="position:absolute;left:960px;top:307px;width:1px;height:3px;background:#000;"></div>
<div style="position:absolute;left:969px;top:304px;width:1px;height:6px;background:#000;"></div>
<div style="position:absolute;left:978px;top:307px;width:1px;height:3px;background:#000;"></div>
<div style="position:absolute;left:987px;top:307px;width:1px;height:3px;background:#000;"></div>
<div style="position:absolute;left:977.88px;top:289.88px;font:normal 9px/18px 'Liberation Sans', sans-serif;color:#000;white-space:pre;letter-spacing:-0.100px;">4800</div>
<div style="position:absolute;left:997px;top:307px;width:1px;height:3px;background:#000;"></div>
<div style="position:absolute;left:1006px;top:304px;width:1px;height:6px;background:#000;"></div>
<div style="position:absolute;left:1015px;top:307px;width:1px;height:3px;background:#000;"></div>
<div style="position:absolute;left:1024px;top:307px;width:1px;height:3px;background:#000;"></div>
<div style="position:absolute;left:1014.88px;top:289.88px;font:normal 9px/18px 'Liberation Sans', sans-serif;color:#000;white-space:pre;letter-spacing:-0.100px;">5000</div>
<div style="position:absolute;left:1034px;top:307px;width:1px;height:3px;background:#000;"></div>
<div style="position:absolute;left:1043px;top:304px;width:1px;height:6px;background:#000;"></div>
<div style="position:absolute;left:1052px;top:307px;width:1px;height:3px;background:#000;"></div>
<div style="position:absolute;left:1061px;top:307px;width:1px;height:3px;background:#000;"></div>
<div style="position:absolute;left:1051.88px;top:289.88px;font:normal 9px/18px 'Liberation Sans', sans-serif;color:#000;white-space:pre;letter-spacing:-0.100px;">5200</div>
<div style="position:absolute;left:1071px;top:307px;width:1px;height:3px;background:#000;"></div>
<div style="position:absolute;left:1080px;top:304px;width:1px;height:6px;background:#000;"></div>
<div style="position:absolute;left:1089px;top:307px;width:1px;height:3px;background:#000;"></div>
<div style="position:absolute;left:1098px;top:307px;width:1px;height:3px;background:#000;"></div>
<div style="position:absolute;left:1088.88px;top:289.88px;font:normal 9px/18px 'Liberation Sans', sans-serif;color:#000;white-space:pre;letter-spacing:-0.100px;">5400</div>
<div style="position:absolute;left:1108px;top:307px;width:1px;height:3px;background:#000;"></div>
<div style="position:absolute;left:40px;top:697px;width:3px;height:1px;background:#000;"></div>
<div style="position:absolute;left:32px;top:698.0px;width:0;height:0"><div style="position:absolute;left:-20px;top:-9px;width:40px;height:18px;line-height:18px;text-align:center;font:11px/18px 'Liberation Sans', sans-serif;transform:rotate(-90deg);white-space:pre">200</div></div>
<div style="position:absolute;left:40px;top:687px;width:3px;height:1px;background:#000;"></div>
<div style="position:absolute;left:37px;top:678px;width:6px;height:1px;background:#000;"></div>
<div style="position:absolute;left:40px;top:669px;width:3px;height:1px;background:#000;"></div>
<div style="position:absolute;left:37px;top:660px;width:6px;height:1px;background:#000;"></div>
<div style="position:absolute;left:32px;top:661.0px;width:0;height:0"><div style="position:absolute;left:-20px;top:-9px;width:40px;height:18px;line-height:18px;text-align:center;font:11px/18px 'Liberation Sans', sans-serif;transform:rotate(-90deg);white-space:pre">0</div></div>
<div style="position:absolute;left:40px;top:650px;width:3px;height:1px;background:#000;"></div>
<div style="position:absolute;left:37px;top:641px;width:6px;height:1px;background:#000;"></div>
<div style="position:absolute;left:40px;top:632px;width:3px;height:1px;background:#000;"></div>
<div style="position:absolute;left:40px;top:623px;width:3px;height:1px;background:#000;"></div>
<div style="position:absolute;left:32px;top:624.0px;width:0;height:0"><div style="position:absolute;left:-20px;top:-9px;width:40px;height:18px;line-height:18px;text-align:center;font:11px/18px 'Liberation Sans', sans-serif;transform:rotate(-90deg);white-space:pre">200</div></div>
<div style="position:absolute;left:40px;top:613px;width:3px;height:1px;background:#000;"></div>
<div style="position:absolute;left:37px;top:604px;width:6px;height:1px;background:#000;"></div>
<div style="position:absolute;left:40px;top:595px;width:3px;height:1px;background:#000;"></div>
<div style="position:absolute;left:40px;top:586px;width:3px;height:1px;background:#000;"></div>
<div style="position:absolute;left:32px;top:587.0px;width:0;height:0"><div style="position:absolute;left:-20px;top:-9px;width:40px;height:18px;line-height:18px;text-align:center;font:11px/18px 'Liberation Sans', sans-serif;transform:rotate(-90deg);white-space:pre">400</div></div>
<div style="position:absolute;left:40px;top:576px;width:3px;height:1px;background:#000;"></div>
<div style="position:absolute;left:37px;top:567px;width:6px;height:1px;background:#000;"></div>
<div style="position:absolute;left:40px;top:558px;width:3px;height:1px;background:#000;"></div>
<div style="position:absolute;left:40px;top:549px;width:3px;height:1px;background:#000;"></div>
<div style="position:absolute;left:32px;top:550.0px;width:0;height:0"><div style="position:absolute;left:-20px;top:-9px;width:40px;height:18px;line-height:18px;text-align:center;font:11px/18px 'Liberation Sans', sans-serif;transform:rotate(-90deg);white-space:pre">600</div></div>
<div style="position:absolute;left:40px;top:539px;width:3px;height:1px;background:#000;"></div>
<div style="position:absolute;left:37px;top:530px;width:6px;height:1px;background:#000;"></div>
<div style="position:absolute;left:40px;top:521px;width:3px;height:1px;background:#000;"></div>
<div style="position:absolute;left:40px;top:512px;width:3px;height:1px;background:#000;"></div>
<div style="position:absolute;left:32px;top:513.0px;width:0;height:0"><div style="position:absolute;left:-20px;top:-9px;width:40px;height:18px;line-height:18px;text-align:center;font:11px/18px 'Liberation Sans', sans-serif;transform:rotate(-90deg);white-space:pre">800</div></div>
<div style="position:absolute;left:40px;top:502px;width:3px;height:1px;background:#000;"></div>
<div style="position:absolute;left:37px;top:493px;width:6px;height:1px;background:#000;"></div>
<div style="position:absolute;left:40px;top:484px;width:3px;height:1px;background:#000;"></div>
<div style="position:absolute;left:40px;top:475px;width:3px;height:1px;background:#000;"></div>
<div style="position:absolute;left:32px;top:476.0px;width:0;height:0"><div style="position:absolute;left:-20px;top:-9px;width:40px;height:18px;line-height:18px;text-align:center;font:11px/18px 'Liberation Sans', sans-serif;transform:rotate(-90deg);white-space:pre">1000</div></div>
<div style="position:absolute;left:40px;top:465px;width:3px;height:1px;background:#000;"></div>
<div style="position:absolute;left:37px;top:456px;width:6px;height:1px;background:#000;"></div>
<div style="position:absolute;left:40px;top:447px;width:3px;height:1px;background:#000;"></div>
<div style="position:absolute;left:40px;top:438px;width:3px;height:1px;background:#000;"></div>
<div style="position:absolute;left:32px;top:439.0px;width:0;height:0"><div style="position:absolute;left:-20px;top:-9px;width:40px;height:18px;line-height:18px;text-align:center;font:11px/18px 'Liberation Sans', sans-serif;transform:rotate(-90deg);white-space:pre">1200</div></div>
<div style="position:absolute;left:40px;top:428px;width:3px;height:1px;background:#000;"></div>
<div style="position:absolute;left:37px;top:419px;width:6px;height:1px;background:#000;"></div>
<div style="position:absolute;left:40px;top:410px;width:3px;height:1px;background:#000;"></div>
<div style="position:absolute;left:40px;top:401px;width:3px;height:1px;background:#000;"></div>
<div style="position:absolute;left:32px;top:402.0px;width:0;height:0"><div style="position:absolute;left:-20px;top:-9px;width:40px;height:18px;line-height:18px;text-align:center;font:11px/18px 'Liberation Sans', sans-serif;transform:rotate(-90deg);white-space:pre">1400</div></div>
<div style="position:absolute;left:40px;top:391px;width:3px;height:1px;background:#000;"></div>
<div style="position:absolute;left:37px;top:382px;width:6px;height:1px;background:#000;"></div>
<div style="position:absolute;left:40px;top:373px;width:3px;height:1px;background:#000;"></div>
<div style="position:absolute;left:40px;top:364px;width:3px;height:1px;background:#000;"></div>
<div style="position:absolute;left:32px;top:365.0px;width:0;height:0"><div style="position:absolute;left:-20px;top:-9px;width:40px;height:18px;line-height:18px;text-align:center;font:11px/18px 'Liberation Sans', sans-serif;transform:rotate(-90deg);white-space:pre">1600</div></div>
<div style="position:absolute;left:40px;top:354px;width:3px;height:1px;background:#000;"></div>
<div style="position:absolute;left:37px;top:345px;width:6px;height:1px;background:#000;"></div>
<div style="position:absolute;left:40px;top:336px;width:3px;height:1px;background:#000;"></div>
<div style="position:absolute;left:40px;top:327px;width:3px;height:1px;background:#000;"></div>
<div style="position:absolute;left:32px;top:328.0px;width:0;height:0"><div style="position:absolute;left:-20px;top:-9px;width:40px;height:18px;line-height:18px;text-align:center;font:11px/18px 'Liberation Sans', sans-serif;transform:rotate(-90deg);white-space:pre">1800</div></div>
<div style="position:absolute;left:40px;top:317px;width:3px;height:1px;background:#000;"></div>
<div style="position:absolute;left:21px;top:706px;width:124px;height:20px;background:#cfdff1;"></div>
<div style="position:absolute;left:145px;top:708px;width:955px;height:16px;background:#f0f0f0;"></div>
<div style="position:absolute;left:1100px;top:706px;width:17px;height:20px;background:#cfdff1;"></div>
<div style="position:absolute;left:145px;top:724px;width:972px;height:2px;background:#d3e1f1;"></div>
<div style="position:absolute;left:428px;top:708px;width:389px;height:15px;background:#cdcdcd;"></div>
<div style="position:absolute;left:1101px;top:313px;width:16px;height:393px;background:#f0f0f0;"></div>
<div style="position:absolute;left:1101px;top:471px;width:15px;height:77px;background:#cdcdcd;"></div>
<svg style="left:1103.5px;top:318px" width="10" height="10" viewBox="-5 -5 10 10"><path d="M-3.2 -1.6 L0 1.6 L3.2 -1.6" transform="rotate(180)" stroke="#505050" stroke-width="2.1" fill="none"/></svg>
<svg style="left:1103.5px;top:692.9px" width="10" height="10" viewBox="-5 -5 10 10"><path d="M-3.2 -1.6 L0 1.6 L3.2 -1.6" transform="rotate(0)" stroke="#505050" stroke-width="2.1" fill="none"/></svg>
<svg style="left:148.1px;top:710.6px" width="10" height="10" viewBox="-5 -5 10 10"><path d="M-3.2 -1.6 L0 1.6 L3.2 -1.6" transform="rotate(90)" stroke="#505050" stroke-width="2.1" fill="none"/></svg>
<svg style="left:1086.9px;top:710.6px" width="10" height="10" viewBox="-5 -5 10 10"><path d="M-3.2 -1.6 L0 1.6 L3.2 -1.6" transform="rotate(270)" stroke="#505050" stroke-width="2.1" fill="none"/></svg>
<div style="position:absolute;left:41px;top:707px;width:18px;height:18px;border:1px solid #77788c;background:#e6eef8"></div>
<svg style="left:43px;top:709px" width="15" height="15" viewBox="0 0 15 15"><circle cx="6.5" cy="6.4" r="5.9" fill="none" stroke="#0a3262" stroke-width="1.3"/><path d="M2.9 6.5 L10.1 6.5" stroke="#0a3262" stroke-width="1.1"/><path d="M6.5 3 L6.5 10" stroke="#0a3262" stroke-width="1.1"/><path d="M11.2 11 L13.3 13.1" stroke="#061c40" stroke-width="2.1" stroke-linecap="round"/></svg>
<div style="position:absolute;left:59px;top:707px;width:18px;height:18px;border:1px solid #77788c;background:#e6eef8"></div>
<svg style="left:61px;top:709px" width="15" height="15" viewBox="0 0 15 15"><circle cx="6.5" cy="6.4" r="5.9" fill="none" stroke="#0a3262" stroke-width="1.3"/><path d="M3 6.5 L10 6.5 M6.5 3 L6.5 10" stroke="#0a3262" stroke-width="1" fill="none"/><path d="M2 6.5 L4.5 4.5 L4.5 8.5 Z M11 6.5 L8.5 4.5 L8.5 8.5 Z M6.5 2 L4.5 4.5 L8.5 4.5 Z M6.5 11 L4.5 8.5 L8.5 8.5 Z" fill="#0a3262"/><path d="M11.2 11 L13.3 13.1" stroke="#061c40" stroke-width="2.1" stroke-linecap="round"/></svg>
<div style="position:absolute;left:77px;top:707px;width:18px;height:18px;border:1px solid #77788c;background:#e6eef8"></div>
<svg style="left:79px;top:709px" width="15" height="15" viewBox="0 0 15 15"><circle cx="6.5" cy="6.4" r="5.9" fill="none" stroke="#0a3262" stroke-width="1.3"/><path d="M2.9 6.5 L10.1 6.5" stroke="#0a3262" stroke-width="1.1"/><path d="M11.2 11 L13.3 13.1" stroke="#061c40" stroke-width="2.1" stroke-linecap="round"/></svg>
<div style="position:absolute;left:97px;top:714px;width:1px;height:5px;background:#a0a0a0;"></div>
<div style="position:absolute;left:98px;top:714px;width:1px;height:5px;background:#ffffff;"></div>
<div style="position:absolute;left:101px;top:707px;width:18px;height:18px;border:1px solid #77788c;background:#d2e2f3"></div>
<svg style="left:103px;top:709px" width="14" height="14" viewBox="0 0 14 14"><rect x="1.5" y="0.5" width="11" height="5.2" fill="#fff"/><path d="M1.5 0.5 L1.5 12.5 M12.5 0.5 L12.5 12.5 M1.5 0.5 L12.5 0.5" stroke="#8a8a90" stroke-width="1" fill="none"/><path d="M2.5 12.5 L11.5 12.5" stroke="#6a6a70" stroke-width="1.2"/><path d="M4.3 0.5 V2 M6.2 0.5 V2 M8.4 0.5 V3.6 M10.6 0.5 V2" stroke="#77777d" stroke-width="1"/><circle cx="1.6" cy="12.5" r="1.2" fill="#fff" stroke="#8a8a90" stroke-width="0.8"/><circle cx="12.4" cy="12.5" r="1.2" fill="#fff" stroke="#8a8a90" stroke-width="0.8"/></svg>
<div style="position:absolute;left:119px;top:707px;width:18px;height:18px;border:1px solid #77788c;background:#d2e2f3"></div>
<svg style="left:121px;top:709px" width="14" height="14" viewBox="0 0 14 14"><rect x="1.5" y="5.6" width="11" height="5.2" fill="#fff"/><path d="M1.5 1.5 V12.5 M12.5 1.5 V12.5 M1.5 5.3 H12.5" stroke="#8a8a90" stroke-width="1" fill="none"/><path d="M4 5.5 V7 M6.2 5.5 V7 M8.5 5.5 V8.6 M10.5 5.5 V7" stroke="#77777d" stroke-width="1"/><circle cx="1.5" cy="1.5" r="1.2" fill="#fff" stroke="#8a8a90" stroke-width="0.8"/><circle cx="12.5" cy="1.5" r="1.2" fill="#fff" stroke="#8a8a90" stroke-width="0.8"/><circle cx="1.5" cy="12.5" r="1.2" fill="#fff" stroke="#8a8a90" stroke-width="0.8"/><circle cx="12.5" cy="12.5" r="1.2" fill="#fff" stroke="#8a8a90" stroke-width="0.8"/></svg>
<svg style="left:0;top:0" width="1137" height="791" viewBox="0 0 1137 791" shape-rendering="geometricPrecision"><rect x="99.5" y="453.5" width="305.60" height="209.60" fill="#fff" stroke="#808080"/><line x1="103" y1="661.5" x2="405.1" y2="661.5" stroke="#444" stroke-width="1" stroke-dasharray="1 3" shape-rendering="crispEdges"/><line x1="103.50" y1="661.00" x2="316.40" y2="661.00" stroke="#ff0000" stroke-width="1" stroke-linecap="butt"/><rect x="103.4" y="463.4" width="125.3" height="18.7" rx="2" ry="2" stroke="#ff0000" fill="none" shape-rendering="geometricPrecision"/><rect x="103.4" y="482.1" width="125.3" height="18.7" rx="2" ry="2" stroke="#ff0000" fill="none" shape-rendering="geometricPrecision"/><line x1="108.00" y1="463.40" x2="108.00" y2="500.80" stroke="#00ff00" stroke-width="1" stroke-linecap="butt"/><line x1="224.10" y1="463.40" x2="224.10" y2="500.80" stroke="#00ff00" stroke-width="1" stroke-linecap="butt"/><line x1="108.00" y1="482.20" x2="224.10" y2="482.20" stroke="#00ff00" stroke-width="1.5" stroke-linecap="butt"/><line x1="137.00" y1="473.00" x2="137.00" y2="491.60" stroke="#ff0000" stroke-width="2" stroke-linecap="butt"/><line x1="166.00" y1="473.00" x2="166.00" y2="491.60" stroke="#ff0000" stroke-width="2" stroke-linecap="butt"/><line x1="195.00" y1="473.00" x2="195.00" y2="491.60" stroke="#ff0000" stroke-width="2" stroke-linecap="butt"/><path d="M149.20 486.80 L155.20 492.63 L154.90 497.80 L149.20 497.47 Z" fill="#2f7a78"/><path d="M151.36 489.55 L154.78 492.85 L154.36 495.60 L152.02 492.30 Z" fill="#ffffff"/><path d="M151.12 492.30 L151.84 492.30 L151.84 497.14 L151.12 497.14 Z" fill="#ffffff"/><path d="M265.4 465.6 L380.3 465.6 L380.3 534.1 L265.4 534.1 Z" stroke="#ff0000" stroke-width="1" fill="none"/><line x1="151.60" y1="501.40" x2="151.60" y2="618.30" stroke="#ff0000" stroke-width="1" stroke-linecap="butt"/><line x1="224.40" y1="501.40" x2="224.40" y2="618.30" stroke="#ff0000" stroke-width="1" stroke-linecap="butt"/><line x1="151.60" y1="598.20" x2="224.40" y2="598.20" stroke="#00ff00" stroke-width="1" stroke-linecap="butt"/><line x1="151.60" y1="618.30" x2="162.10" y2="618.30" stroke="#ff0000" stroke-width="1" stroke-linecap="butt"/><line x1="162.10" y1="618.30" x2="179.30" y2="618.30" stroke="#00ff00" stroke-width="1" stroke-linecap="butt"/><path d="M179.3 618.3 L180.3 615.7 L195.7 615.7 L196.7 618.3" stroke="#ff0000" stroke-width="1" fill="none"/><line x1="196.70" y1="618.30" x2="213.30" y2="618.30" stroke="#00ff00" stroke-width="1" stroke-linecap="butt"/><line x1="213.30" y1="618.30" x2="224.40" y2="618.30" stroke="#ff0000" stroke-width="1" stroke-linecap="butt"/><line x1="177.5" y1="529.7" x2="199" y2="529.7" stroke="#ff0000" stroke-width="2.4" stroke-linecap="round" shape-rendering="geometricPrecision"/><path d="M163.5 533.5 L168.5 533.5 Q170.5 533.5 170.5 535.5 L170.5 563.5 Q170.5 565.5 168.5 565.5 L163.5 565.5" stroke="#ff0000" fill="none" shape-rendering="geometricPrecision"/><line x1="163.40" y1="533.60" x2="163.40" y2="565.90" stroke="#00ff00" stroke-width="1" stroke-linecap="butt"/><path d="M212.5 533.5 L207.5 533.5 Q205.5 533.5 205.5 535.5 L205.5 563.5 Q205.5 565.5 207.5 565.5 L212.5 565.5" stroke="#ff0000" fill="none" shape-rendering="geometricPrecision"/><line x1="213.00" y1="533.60" x2="213.00" y2="565.90" stroke="#00ff00" stroke-width="1" stroke-linecap="butt"/><line x1="162.20" y1="618.30" x2="162.20" y2="661.00" stroke="#00ff00" stroke-width="1" stroke-linecap="butt"/><line x1="213.30" y1="618.30" x2="213.30" y2="661.00" stroke="#00ff00" stroke-width="1" stroke-linecap="butt"/><path d="M183.90 641.10 L192.90 649.37 L192.45 656.70 L183.90 656.23 Z" fill="#2f7a78"/><path d="M187.14 645.00 L192.27 649.68 L191.64 653.58 L188.13 648.90 Z" fill="#ffffff"/><path d="M186.78 648.90 L187.86 648.90 L187.86 655.76 L186.78 655.76 Z" fill="#ffffff"/><line x1="103.50" y1="535.90" x2="103.50" y2="661.00" stroke="#ff0000" stroke-width="1" stroke-linecap="butt"/><line x1="103.50" y1="535.90" x2="110.50" y2="535.90" stroke="#ff0000" stroke-width="1" stroke-linecap="butt"/><line x1="110.60" y1="535.90" x2="110.60" y2="661.00" stroke="#00ff00" stroke-width="1" stroke-linecap="butt"/><path d="M107.5 548.2 L109.5 545.7 L113.5 545.7 L113.5 550.7 L109.5 550.7 Z" stroke="#ff0000" fill="none" shape-rendering="geometricPrecision"/><path d="M107.5 598.3 L109.5 595.8 L113.5 595.8 L113.5 600.8 L109.5 600.8 Z" stroke="#ff0000" fill="none" shape-rendering="geometricPrecision"/><path d="M107.5 651.9 L109.5 649.4 L113.5 649.4 L113.5 654.4 L109.5 654.4 Z" stroke="#ff0000" fill="none" shape-rendering="geometricPrecision"/><path d="M110.5 535.9 L124.3 531.1 L151.6 605.0" stroke="#ff0000" stroke-width="1" fill="none"/><line x1="110.50" y1="535.90" x2="143.60" y2="625.40" stroke="#00ff00" stroke-width="1" stroke-linecap="butt"/><line x1="121.6" y1="564.6" x2="133.3" y2="595.3" stroke="#ff0000" stroke-width="2.6" shape-rendering="geometricPrecision"/><line x1="143.60" y1="625.40" x2="162.20" y2="618.30" stroke="#ff0000" stroke-width="1" stroke-linecap="butt"/><path d="M265.5 534.1 L252.6 529.1 L224.4 605.0" stroke="#ff0000" stroke-width="1" fill="none"/><line x1="265.50" y1="534.10" x2="232.60" y2="625.40" stroke="#00ff00" stroke-width="1" stroke-linecap="butt"/><line x1="254.7" y1="564.3" x2="243" y2="595.3" stroke="#ff0000" stroke-width="2.6" shape-rendering="geometricPrecision"/><line x1="232.60" y1="625.40" x2="213.30" y2="618.30" stroke="#ff0000" stroke-width="1" stroke-linecap="butt"/><line x1="265.70" y1="534.10" x2="265.70" y2="661.00" stroke="#00ff00" stroke-width="1" stroke-linecap="butt"/><line x1="316.40" y1="534.10" x2="316.40" y2="661.00" stroke="#ff0000" stroke-width="1" stroke-linecap="butt"/><path d="M316.4 543.2 L319.5 543.2 L319.5 550.1 L316.4 550.1" stroke="#ff0000" stroke-width="1" fill="none"/><line x1="315.50" y1="544.20" x2="315.50" y2="549.10" stroke="#00ff00" stroke-width="1" stroke-linecap="butt"/><path d="M316.4 594.7 L319.5 594.7 L319.5 602.3 L316.4 602.3" stroke="#ff0000" stroke-width="1" fill="none"/><line x1="315.50" y1="595.70" x2="315.50" y2="601.30" stroke="#00ff00" stroke-width="1" stroke-linecap="butt"/><path d="M316.4 648.0 L319.5 648.0 L319.5 655.2 L316.4 655.2" stroke="#ff0000" stroke-width="1" fill="none"/><line x1="315.50" y1="649.00" x2="315.50" y2="654.20" stroke="#00ff00" stroke-width="1" stroke-linecap="butt"/><rect x="321.5" y="548.5" width="80.2" height="18.8" rx="2" ry="2" stroke="#ff0000" fill="none" shape-rendering="geometricPrecision"/><rect x="321.5" y="567.3" width="80.2" height="18.6" rx="2" ry="2" stroke="#ff0000" fill="none" shape-rendering="geometricPrecision"/><line x1="326.50" y1="548.50" x2="326.50" y2="585.90" stroke="#00ff00" stroke-width="1" stroke-linecap="butt"/><line x1="396.70" y1="548.50" x2="396.70" y2="585.90" stroke="#00ff00" stroke-width="1" stroke-linecap="butt"/><line x1="326.50" y1="567.30" x2="396.70" y2="567.30" stroke="#00ff00" stroke-width="1.8" stroke-linecap="butt"/><line x1="349.90" y1="548.50" x2="349.90" y2="558.30" stroke="#ff0000" stroke-width="2" stroke-linecap="butt"/><line x1="349.90" y1="576.40" x2="349.90" y2="585.90" stroke="#ff0000" stroke-width="2" stroke-linecap="butt"/><line x1="373.30" y1="548.50" x2="373.30" y2="558.30" stroke="#ff0000" stroke-width="2" stroke-linecap="butt"/><line x1="373.30" y1="576.40" x2="373.30" y2="585.90" stroke="#ff0000" stroke-width="2" stroke-linecap="butt"/><path d="M358.90 573.30 L364.10 578.07 L363.84 582.30 L358.90 582.03 Z" fill="#2f7a78"/><path d="M360.77 575.55 L363.74 578.25 L363.37 580.50 L361.34 577.80 Z" fill="#ffffff"/><path d="M360.56 577.80 L361.19 577.80 L361.19 581.76 L360.56 581.76 Z" fill="#ffffff"/><rect x="319.4" y="586.2" width="80.2" height="18.8" rx="2" ry="2" stroke="#ff0000" fill="none" shape-rendering="geometricPrecision"/><rect x="319.4" y="605.0" width="80.2" height="18.6" rx="2" ry="2" stroke="#ff0000" fill="none" shape-rendering="geometricPrecision"/><line x1="324.40" y1="586.20" x2="324.40" y2="623.60" stroke="#00ff00" stroke-width="1" stroke-linecap="butt"/><line x1="394.60" y1="586.20" x2="394.60" y2="623.60" stroke="#00ff00" stroke-width="1" stroke-linecap="butt"/><line x1="324.40" y1="605.00" x2="394.60" y2="605.00" stroke="#00ff00" stroke-width="1.8" stroke-linecap="butt"/><line x1="347.80" y1="586.20" x2="347.80" y2="596.00" stroke="#ff0000" stroke-width="2" stroke-linecap="butt"/><line x1="347.80" y1="614.10" x2="347.80" y2="623.60" stroke="#ff0000" stroke-width="2" stroke-linecap="butt"/><line x1="371.20" y1="586.20" x2="371.20" y2="596.00" stroke="#ff0000" stroke-width="2" stroke-linecap="butt"/><line x1="371.20" y1="614.10" x2="371.20" y2="623.60" stroke="#ff0000" stroke-width="2" stroke-linecap="butt"/><path d="M356.80 611.00 L362.00 615.77 L361.74 620.00 L356.80 619.73 Z" fill="#2f7a78"/><path d="M358.67 613.25 L361.64 615.95 L361.27 618.20 L359.24 615.50 Z" fill="#ffffff"/><path d="M358.46 615.50 L359.09 615.50 L359.09 619.46 L358.46 619.46 Z" fill="#ffffff"/><rect x="319.4" y="623.5" width="80.2" height="18.8" rx="2" ry="2" stroke="#ff0000" fill="none" shape-rendering="geometricPrecision"/><rect x="319.4" y="642.3" width="80.2" height="18.6" rx="2" ry="2" stroke="#ff0000" fill="none" shape-rendering="geometricPrecision"/><line x1="324.40" y1="623.50" x2="324.40" y2="660.90" stroke="#00ff00" stroke-width="1" stroke-linecap="butt"/><line x1="394.60" y1="623.50" x2="394.60" y2="660.90" stroke="#00ff00" stroke-width="1" stroke-linecap="butt"/><line x1="324.40" y1="642.30" x2="394.60" y2="642.30" stroke="#00ff00" stroke-width="1.8" stroke-linecap="butt"/><line x1="347.80" y1="623.50" x2="347.80" y2="633.30" stroke="#ff0000" stroke-width="2" stroke-linecap="butt"/><line x1="347.80" y1="651.40" x2="347.80" y2="660.90" stroke="#ff0000" stroke-width="2" stroke-linecap="butt"/><line x1="371.20" y1="623.50" x2="371.20" y2="633.30" stroke="#ff0000" stroke-width="2" stroke-linecap="butt"/><line x1="371.20" y1="651.40" x2="371.20" y2="660.90" stroke="#ff0000" stroke-width="2" stroke-linecap="butt"/><path d="M356.80 648.30 L362.00 653.07 L361.74 657.30 L356.80 657.03 Z" fill="#2f7a78"/><path d="M358.67 650.55 L361.64 653.25 L361.27 655.50 L359.24 652.80 Z" fill="#ffffff"/><path d="M358.46 652.80 L359.09 652.80 L359.09 656.76 L358.46 656.76 Z" fill="#ffffff"/><rect x="420.8" y="477.9" width="296.30" height="185.20" fill="#fff" stroke="#808080"/><line x1="424" y1="661.5" x2="717.1" y2="661.5" stroke="#444" stroke-width="1" stroke-dasharray="1 3" shape-rendering="crispEdges"/><path d="M512.1 526.3 L512.1 506.6 L626.9 506.6 L626.9 526.3" stroke="#ff0000" stroke-width="1" fill="none"/><line x1="540.70" y1="506.60" x2="540.70" y2="526.30" stroke="#ff0000" stroke-width="2" stroke-linecap="butt"/><line x1="569.60" y1="506.60" x2="569.60" y2="526.30" stroke="#ff0000" stroke-width="2" stroke-linecap="butt"/><line x1="598.30" y1="506.60" x2="598.30" y2="526.30" stroke="#ff0000" stroke-width="2" stroke-linecap="butt"/><line x1="511.00" y1="526.30" x2="627.50" y2="526.30" stroke="#00ff00" stroke-width="2" stroke-linecap="butt"/><path d="M512.1 639.0 L512.1 659.6 L626.9 659.6 L626.9 639.0" stroke="#ff0000" stroke-width="1" fill="none"/><line x1="540.70" y1="639.00" x2="540.70" y2="659.60" stroke="#ff0000" stroke-width="2" stroke-linecap="butt"/><line x1="569.60" y1="639.00" x2="569.60" y2="659.60" stroke="#ff0000" stroke-width="2" stroke-linecap="butt"/><line x1="598.30" y1="639.00" x2="598.30" y2="659.60" stroke="#ff0000" stroke-width="2" stroke-linecap="butt"/><line x1="511.00" y1="639.00" x2="627.50" y2="639.00" stroke="#00ff00" stroke-width="2" stroke-linecap="butt"/><path d="M489.3 548.7 L470.4 548.7 L470.4 617.6 L489.3 617.6" stroke="#ff0000" stroke-width="1" fill="none"/><line x1="470.40" y1="571.30" x2="489.30" y2="571.30" stroke="#ff0000" stroke-width="2" stroke-linecap="butt"/><line x1="470.40" y1="594.70" x2="489.30" y2="594.70" stroke="#ff0000" stroke-width="2" stroke-linecap="butt"/><path d="M649.3 548.7 L668.6 548.7 L668.6 617.6 L649.3 617.6" stroke="#ff0000" stroke-width="1" fill="none"/><line x1="649.30" y1="571.30" x2="668.60" y2="571.30" stroke="#ff0000" stroke-width="2" stroke-linecap="butt"/><line x1="649.30" y1="594.70" x2="668.60" y2="594.70" stroke="#ff0000" stroke-width="2" stroke-linecap="butt"/><path d="M491.4 527.4 L510.4 527.4 L510.4 547.3 L491.4 547.3 Z" stroke="#ff0000" stroke-width="1" fill="none"/><path d="M491.4 618.3 L510.4 618.3 L510.4 638.6 L491.4 638.6 Z" stroke="#ff0000" stroke-width="1" fill="none"/><path d="M628.9 527.4 L647.6 527.4 L647.6 547.3 L628.9 547.3 Z" stroke="#ff0000" stroke-width="1" fill="none"/><path d="M628.9 618.3 L647.6 618.3 L647.6 638.6 L628.9 638.6 Z" stroke="#ff0000" stroke-width="1" fill="none"/><line x1="489.30" y1="547.30" x2="649.50" y2="547.30" stroke="#00ff00" stroke-width="1" stroke-linecap="butt"/><line x1="489.30" y1="618.30" x2="649.50" y2="618.30" stroke="#00ff00" stroke-width="1" stroke-linecap="butt"/><line x1="489.4" y1="547" x2="489.4" y2="619" stroke="#00ff00" stroke-width="1.2"/><line x1="491.5" y1="547" x2="491.5" y2="619" stroke="#00ff00" stroke-width="1.2"/><line x1="649" y1="547" x2="649" y2="619" stroke="#00ff00" stroke-width="2"/><line x1="510.40" y1="547.30" x2="510.40" y2="618.30" stroke="#00ff00" stroke-width="1" stroke-linecap="butt"/><line x1="628.60" y1="547.30" x2="628.60" y2="618.30" stroke="#00ff00" stroke-width="1" stroke-linecap="butt"/><rect x="521.4" y="546.3" width="10.0" height="2" rx="1" stroke="#ff0000" fill="#fff" shape-rendering="geometricPrecision"/><rect x="550.4" y="546.3" width="10.0" height="2" rx="1" stroke="#ff0000" fill="#fff" shape-rendering="geometricPrecision"/><rect x="579.3" y="546.3" width="9.7" height="2" rx="1" stroke="#ff0000" fill="#fff" shape-rendering="geometricPrecision"/><rect x="607.6" y="546.3" width="11.0" height="2" rx="1" stroke="#ff0000" fill="#ff0000" shape-rendering="geometricPrecision"/><rect x="521.4" y="617.3" width="10.0" height="2" rx="1" stroke="#ff0000" fill="#fff" shape-rendering="geometricPrecision"/><rect x="550.4" y="617.3" width="10.0" height="2" rx="1" stroke="#ff0000" fill="#fff" shape-rendering="geometricPrecision"/><rect x="579.3" y="617.3" width="9.7" height="2" rx="1" stroke="#ff0000" fill="#fff" shape-rendering="geometricPrecision"/><rect x="607.6" y="617.3" width="11.0" height="2" rx="1" stroke="#ff0000" fill="#ff0000" shape-rendering="geometricPrecision"/><rect x="510.5" y="555.6" width="2" height="9.0" stroke="#ff0000" fill="#fff"/><rect x="626.5" y="555.6" width="2" height="9.0" stroke="#ff0000" fill="#ff0000"/><rect x="510.5" y="579.3" width="2" height="8.0" stroke="#ff0000" fill="#fff"/><rect x="626.5" y="579.3" width="2" height="8.0" stroke="#ff0000" fill="#fff"/><rect x="510.5" y="602.6" width="2" height="8.0" stroke="#ff0000" fill="#fff"/><rect x="626.5" y="602.6" width="2" height="8.0" stroke="#ff0000" fill="#fff"/><rect x="555.5" y="562.5" width="4" height="41" rx="2" stroke="#ff0000" fill="none" shape-rendering="geometricPrecision"/><rect x="555.5" y="572.5" width="5" height="21.5" stroke="#00ff00" fill="none"/><path d="M555.5 581 L558 583 L555.5 585" stroke="#ff0000" fill="none" shape-rendering="geometricPrecision"/><path d="M615.80 574.30 L615.80 589.60 L608.39 589.60 L608.00 581.95 Z" fill="#2f7a78"/><path d="M612.99 578.89 L608.62 582.26 L611.51 583.79 Z" fill="#ffffff"/><path d="M611.43 584.40 L609.09 584.40 L609.09 588.38 L611.43 588.38 Z" fill="#ffffff"/><rect x="741.1" y="453.5" width="305.60" height="209.60" fill="#fff" stroke="#808080"/><line x1="745" y1="661.5" x2="1046.7" y2="661.5" stroke="#444" stroke-width="1" stroke-dasharray="1 3" shape-rendering="crispEdges"/><rect x="768.1" y="474.1" width="125.3" height="18.7" rx="2" ry="2" stroke="#ff0000" fill="none" shape-rendering="geometricPrecision"/><rect x="768.1" y="492.8" width="125.3" height="18.7" rx="2" ry="2" stroke="#ff0000" fill="none" shape-rendering="geometricPrecision"/><line x1="772.70" y1="474.10" x2="772.70" y2="511.50" stroke="#00ff00" stroke-width="1" stroke-linecap="butt"/><line x1="888.80" y1="474.10" x2="888.80" y2="511.50" stroke="#00ff00" stroke-width="1" stroke-linecap="butt"/><line x1="772.70" y1="492.80" x2="888.80" y2="492.80" stroke="#00ff00" stroke-width="1.8" stroke-linecap="butt"/><line x1="801.70" y1="483.70" x2="801.70" y2="502.30" stroke="#ff0000" stroke-width="2" stroke-linecap="butt"/><line x1="830.70" y1="483.70" x2="830.70" y2="502.30" stroke="#ff0000" stroke-width="2" stroke-linecap="butt"/><line x1="859.70" y1="483.70" x2="859.70" y2="502.30" stroke="#ff0000" stroke-width="2" stroke-linecap="butt"/><path d="M813.90 497.50 L819.90 503.33 L819.60 508.50 L813.90 508.17 Z" fill="#2f7a78"/><path d="M816.06 500.25 L819.48 503.55 L819.06 506.30 L816.72 503.00 Z" fill="#ffffff"/><path d="M815.82 503.00 L816.54 503.00 L816.54 507.84 L815.82 507.84 Z" fill="#ffffff"/><rect x="894.0" y="474.1" width="125.7" height="18.7" rx="2" ry="2" stroke="#ff0000" fill="none" shape-rendering="geometricPrecision"/><rect x="894.0" y="492.8" width="125.7" height="18.7" rx="2" ry="2" stroke="#ff0000" fill="none" shape-rendering="geometricPrecision"/><line x1="898.60" y1="474.10" x2="898.60" y2="511.50" stroke="#00ff00" stroke-width="1" stroke-linecap="butt"/><line x1="1014.70" y1="474.10" x2="1014.70" y2="511.50" stroke="#00ff00" stroke-width="1" stroke-linecap="butt"/><line x1="898.60" y1="492.80" x2="1014.70" y2="492.80" stroke="#00ff00" stroke-width="1.8" stroke-linecap="butt"/><line x1="927.60" y1="483.70" x2="927.60" y2="502.30" stroke="#ff0000" stroke-width="2" stroke-linecap="butt"/><line x1="956.60" y1="483.70" x2="956.60" y2="502.30" stroke="#ff0000" stroke-width="2" stroke-linecap="butt"/><line x1="985.60" y1="483.70" x2="985.60" y2="502.30" stroke="#ff0000" stroke-width="2" stroke-linecap="butt"/><path d="M939.80 497.50 L945.80 503.33 L945.50 508.50 L939.80 508.17 Z" fill="#2f7a78"/><path d="M941.96 500.25 L945.38 503.55 L944.96 506.30 L942.62 503.00 Z" fill="#ffffff"/><path d="M941.72 503.00 L942.44 503.00 L942.44 507.84 L941.72 507.84 Z" fill="#ffffff"/><rect x="768.1" y="511.5" width="125.3" height="18.7" rx="2" ry="2" stroke="#ff0000" fill="none" shape-rendering="geometricPrecision"/><rect x="768.1" y="530.2" width="125.3" height="18.7" rx="2" ry="2" stroke="#ff0000" fill="none" shape-rendering="geometricPrecision"/><line x1="772.70" y1="511.48" x2="772.70" y2="548.88" stroke="#00ff00" stroke-width="1" stroke-linecap="butt"/><line x1="888.80" y1="511.48" x2="888.80" y2="548.88" stroke="#00ff00" stroke-width="1" stroke-linecap="butt"/><line x1="772.70" y1="530.18" x2="888.80" y2="530.18" stroke="#00ff00" stroke-width="1.8" stroke-linecap="butt"/><line x1="801.70" y1="521.08" x2="801.70" y2="539.68" stroke="#ff0000" stroke-width="2" stroke-linecap="butt"/><line x1="830.70" y1="521.08" x2="830.70" y2="539.68" stroke="#ff0000" stroke-width="2" stroke-linecap="butt"/><line x1="859.70" y1="521.08" x2="859.70" y2="539.68" stroke="#ff0000" stroke-width="2" stroke-linecap="butt"/><path d="M813.90 534.88 L819.90 540.71 L819.60 545.88 L813.90 545.55 Z" fill="#2f7a78"/><path d="M816.06 537.63 L819.48 540.93 L819.06 543.68 L816.72 540.38 Z" fill="#ffffff"/><path d="M815.82 540.38 L816.54 540.38 L816.54 545.22 L815.82 545.22 Z" fill="#ffffff"/><rect x="894.0" y="511.5" width="125.7" height="18.7" rx="2" ry="2" stroke="#ff0000" fill="none" shape-rendering="geometricPrecision"/><rect x="894.0" y="530.2" width="125.7" height="18.7" rx="2" ry="2" stroke="#ff0000" fill="none" shape-rendering="geometricPrecision"/><line x1="898.60" y1="511.48" x2="898.60" y2="548.88" stroke="#00ff00" stroke-width="1" stroke-linecap="butt"/><line x1="1014.70" y1="511.48" x2="1014.70" y2="548.88" stroke="#00ff00" stroke-width="1" stroke-linecap="butt"/><line x1="898.60" y1="530.18" x2="1014.70" y2="530.18" stroke="#00ff00" stroke-width="1.8" stroke-linecap="butt"/><line x1="927.60" y1="521.08" x2="927.60" y2="539.68" stroke="#ff0000" stroke-width="2" stroke-linecap="butt"/><line x1="956.60" y1="521.08" x2="956.60" y2="539.68" stroke="#ff0000" stroke-width="2" stroke-linecap="butt"/><line x1="985.60" y1="521.08" x2="985.60" y2="539.68" stroke="#ff0000" stroke-width="2" stroke-linecap="butt"/><path d="M939.80 534.88 L945.80 540.71 L945.50 545.88 L939.80 545.55 Z" fill="#2f7a78"/><path d="M941.96 537.63 L945.38 540.93 L944.96 543.68 L942.62 540.38 Z" fill="#ffffff"/><path d="M941.72 540.38 L942.44 540.38 L942.44 545.22 L941.72 545.22 Z" fill="#ffffff"/><rect x="768.1" y="548.9" width="125.3" height="18.7" rx="2" ry="2" stroke="#ff0000" fill="none" shape-rendering="geometricPrecision"/><rect x="768.1" y="567.6" width="125.3" height="18.7" rx="2" ry="2" stroke="#ff0000" fill="none" shape-rendering="geometricPrecision"/><line x1="772.70" y1="548.86" x2="772.70" y2="586.26" stroke="#00ff00" stroke-width="1" stroke-linecap="butt"/><line x1="888.80" y1="548.86" x2="888.80" y2="586.26" stroke="#00ff00" stroke-width="1" stroke-linecap="butt"/><line x1="772.70" y1="567.56" x2="888.80" y2="567.56" stroke="#00ff00" stroke-width="1.8" stroke-linecap="butt"/><line x1="801.70" y1="558.46" x2="801.70" y2="577.06" stroke="#ff0000" stroke-width="2" stroke-linecap="butt"/><line x1="830.70" y1="558.46" x2="830.70" y2="577.06" stroke="#ff0000" stroke-width="2" stroke-linecap="butt"/><line x1="859.70" y1="558.46" x2="859.70" y2="577.06" stroke="#ff0000" stroke-width="2" stroke-linecap="butt"/><path d="M813.90 572.26 L819.90 578.09 L819.60 583.26 L813.90 582.93 Z" fill="#2f7a78"/><path d="M816.06 575.01 L819.48 578.31 L819.06 581.06 L816.72 577.76 Z" fill="#ffffff"/><path d="M815.82 577.76 L816.54 577.76 L816.54 582.60 L815.82 582.60 Z" fill="#ffffff"/><rect x="894.0" y="548.9" width="125.7" height="18.7" rx="2" ry="2" stroke="#ff0000" fill="none" shape-rendering="geometricPrecision"/><rect x="894.0" y="567.6" width="125.7" height="18.7" rx="2" ry="2" stroke="#ff0000" fill="none" shape-rendering="geometricPrecision"/><line x1="898.60" y1="548.86" x2="898.60" y2="586.26" stroke="#00ff00" stroke-width="1" stroke-linecap="butt"/><line x1="1014.70" y1="548.86" x2="1014.70" y2="586.26" stroke="#00ff00" stroke-width="1" stroke-linecap="butt"/><line x1="898.60" y1="567.56" x2="1014.70" y2="567.56" stroke="#00ff00" stroke-width="1.8" stroke-linecap="butt"/><line x1="927.60" y1="558.46" x2="927.60" y2="577.06" stroke="#ff0000" stroke-width="2" stroke-linecap="butt"/><line x1="956.60" y1="558.46" x2="956.60" y2="577.06" stroke="#ff0000" stroke-width="2" stroke-linecap="butt"/><line x1="985.60" y1="558.46" x2="985.60" y2="577.06" stroke="#ff0000" stroke-width="2" stroke-linecap="butt"/><path d="M939.80 572.26 L945.80 578.09 L945.50 583.26 L939.80 582.93 Z" fill="#2f7a78"/><path d="M941.96 575.01 L945.38 578.31 L944.96 581.06 L942.62 577.76 Z" fill="#ffffff"/><path d="M941.72 577.76 L942.44 577.76 L942.44 582.60 L941.72 582.60 Z" fill="#ffffff"/><rect x="768.1" y="586.2" width="125.3" height="18.7" rx="2" ry="2" stroke="#ff0000" fill="none" shape-rendering="geometricPrecision"/><rect x="768.1" y="604.9" width="125.3" height="18.7" rx="2" ry="2" stroke="#ff0000" fill="none" shape-rendering="geometricPrecision"/><line x1="772.70" y1="586.24" x2="772.70" y2="623.64" stroke="#00ff00" stroke-width="1" stroke-linecap="butt"/><line x1="888.80" y1="586.24" x2="888.80" y2="623.64" stroke="#00ff00" stroke-width="1" stroke-linecap="butt"/><line x1="772.70" y1="604.94" x2="888.80" y2="604.94" stroke="#00ff00" stroke-width="1.8" stroke-linecap="butt"/><line x1="801.70" y1="595.84" x2="801.70" y2="614.44" stroke="#ff0000" stroke-width="2" stroke-linecap="butt"/><line x1="830.70" y1="595.84" x2="830.70" y2="614.44" stroke="#ff0000" stroke-width="2" stroke-linecap="butt"/><line x1="859.70" y1="595.84" x2="859.70" y2="614.44" stroke="#ff0000" stroke-width="2" stroke-linecap="butt"/><path d="M813.90 609.64 L819.90 615.47 L819.60 620.64 L813.90 620.31 Z" fill="#2f7a78"/><path d="M816.06 612.39 L819.48 615.69 L819.06 618.44 L816.72 615.14 Z" fill="#ffffff"/><path d="M815.82 615.14 L816.54 615.14 L816.54 619.98 L815.82 619.98 Z" fill="#ffffff"/><rect x="894.0" y="586.2" width="125.7" height="18.7" rx="2" ry="2" stroke="#ff0000" fill="none" shape-rendering="geometricPrecision"/><rect x="894.0" y="604.9" width="125.7" height="18.7" rx="2" ry="2" stroke="#ff0000" fill="none" shape-rendering="geometricPrecision"/><line x1="898.60" y1="586.24" x2="898.60" y2="623.64" stroke="#00ff00" stroke-width="1" stroke-linecap="butt"/><line x1="1014.70" y1="586.24" x2="1014.70" y2="623.64" stroke="#00ff00" stroke-width="1" stroke-linecap="butt"/><line x1="898.60" y1="604.94" x2="1014.70" y2="604.94" stroke="#00ff00" stroke-width="1.8" stroke-linecap="butt"/><line x1="927.60" y1="595.84" x2="927.60" y2="614.44" stroke="#ff0000" stroke-width="2" stroke-linecap="butt"/><line x1="956.60" y1="595.84" x2="956.60" y2="614.44" stroke="#ff0000" stroke-width="2" stroke-linecap="butt"/><line x1="985.60" y1="595.84" x2="985.60" y2="614.44" stroke="#ff0000" stroke-width="2" stroke-linecap="butt"/><path d="M939.80 609.64 L945.80 615.47 L945.50 620.64 L939.80 620.31 Z" fill="#2f7a78"/><path d="M941.96 612.39 L945.38 615.69 L944.96 618.44 L942.62 615.14 Z" fill="#ffffff"/><path d="M941.72 615.14 L942.44 615.14 L942.44 619.98 L941.72 619.98 Z" fill="#ffffff"/><rect x="768.1" y="623.6" width="125.3" height="18.7" rx="2" ry="2" stroke="#ff0000" fill="none" shape-rendering="geometricPrecision"/><rect x="768.1" y="642.3" width="125.3" height="18.7" rx="2" ry="2" stroke="#ff0000" fill="none" shape-rendering="geometricPrecision"/><line x1="772.70" y1="623.62" x2="772.70" y2="661.02" stroke="#00ff00" stroke-width="1" stroke-linecap="butt"/><line x1="888.80" y1="623.62" x2="888.80" y2="661.02" stroke="#00ff00" stroke-width="1" stroke-linecap="butt"/><line x1="772.70" y1="642.32" x2="888.80" y2="642.32" stroke="#00ff00" stroke-width="1.8" stroke-linecap="butt"/><line x1="801.70" y1="633.22" x2="801.70" y2="651.82" stroke="#ff0000" stroke-width="2" stroke-linecap="butt"/><line x1="830.70" y1="633.22" x2="830.70" y2="651.82" stroke="#ff0000" stroke-width="2" stroke-linecap="butt"/><line x1="859.70" y1="633.22" x2="859.70" y2="651.82" stroke="#ff0000" stroke-width="2" stroke-linecap="butt"/><path d="M813.90 647.02 L819.90 652.85 L819.60 658.02 L813.90 657.69 Z" fill="#2f7a78"/><path d="M816.06 649.77 L819.48 653.07 L819.06 655.82 L816.72 652.52 Z" fill="#ffffff"/><path d="M815.82 652.52 L816.54 652.52 L816.54 657.36 L815.82 657.36 Z" fill="#ffffff"/><rect x="894.0" y="623.6" width="125.7" height="18.7" rx="2" ry="2" stroke="#ff0000" fill="none" shape-rendering="geometricPrecision"/><rect x="894.0" y="642.3" width="125.7" height="18.7" rx="2" ry="2" stroke="#ff0000" fill="none" shape-rendering="geometricPrecision"/><line x1="898.60" y1="623.62" x2="898.60" y2="661.02" stroke="#00ff00" stroke-width="1" stroke-linecap="butt"/><line x1="1014.70" y1="623.62" x2="1014.70" y2="661.02" stroke="#00ff00" stroke-width="1" stroke-linecap="butt"/><line x1="898.60" y1="642.32" x2="1014.70" y2="642.32" stroke="#00ff00" stroke-width="1.8" stroke-linecap="butt"/><line x1="927.60" y1="633.22" x2="927.60" y2="651.82" stroke="#ff0000" stroke-width="2" stroke-linecap="butt"/><line x1="956.60" y1="633.22" x2="956.60" y2="651.82" stroke="#ff0000" stroke-width="2" stroke-linecap="butt"/><line x1="985.60" y1="633.22" x2="985.60" y2="651.82" stroke="#ff0000" stroke-width="2" stroke-linecap="butt"/><path d="M939.80 647.02 L945.80 652.85 L945.50 658.02 L939.80 657.69 Z" fill="#2f7a78"/><path d="M941.96 649.77 L945.38 653.07 L944.96 655.82 L942.62 652.52 Z" fill="#ffffff"/><path d="M941.72 652.52 L942.44 652.52 L942.44 657.36 L941.72 657.36 Z" fill="#ffffff"/></svg>
<div style="position:absolute;left:100.90px;top:390.69px;font:normal 11px/22px 'Liberation Sans', sans-serif;color:#800080;white-space:pre;letter-spacing:-0.281px;">Name:</div>
<div style="position:absolute;left:139.70px;top:390.69px;font:normal 11px/22px 'Liberation Sans', sans-serif;color:#800080;white-space:pre;letter-spacing:0.202px;">Bobst SP 162</div>
<div style="position:absolute;left:100.90px;top:406.19px;font:normal 11px/22px 'Liberation Sans', sans-serif;color:#800080;white-space:pre;letter-spacing:-0.170px;">Count:</div>
<div style="position:absolute;left:139.70px;top:406.19px;font:normal 11px/22px 'Liberation Sans', sans-serif;color:#800080;white-space:pre;letter-spacing:0.221px;">100 of 110</div>
<div style="position:absolute;left:100.40px;top:421.69px;font:normal 11px/22px 'Liberation Sans', sans-serif;color:#800080;white-space:pre;letter-spacing:-0.088px;">Waste:</div>
<div style="position:absolute;left:139.20px;top:421.69px;font:normal 11px/22px 'Liberation Sans', sans-serif;color:#800080;white-space:pre;letter-spacing:0.089px;">22.31 %</div>
<div style="position:absolute;left:420.90px;top:414.79px;font:normal 11px/22px 'Liberation Sans', sans-serif;color:#800080;white-space:pre;letter-spacing:-0.181px;">Name:</div>
<div style="position:absolute;left:459.70px;top:414.79px;font:normal 11px/22px 'Liberation Sans', sans-serif;color:#800080;white-space:pre;letter-spacing:0.267px;">User-defined 1600.00 x 1000.00  mm</div>
<div style="position:absolute;left:420.90px;top:430.29px;font:normal 11px/22px 'Liberation Sans', sans-serif;color:#800080;white-space:pre;letter-spacing:-0.070px;">Count:</div>
<div style="position:absolute;left:459.70px;top:430.29px;font:normal 11px/22px 'Liberation Sans', sans-serif;color:#800080;white-space:pre;letter-spacing:0.230px;">100 of 100</div>
<div style="position:absolute;left:420.50px;top:445.79px;font:normal 11px/22px 'Liberation Sans', sans-serif;color:#800080;white-space:pre;letter-spacing:0.029px;">Waste:</div>
<div style="position:absolute;left:459.30px;top:445.79px;font:normal 11px/22px 'Liberation Sans', sans-serif;color:#800080;white-space:pre;letter-spacing:0.118px;">54.18 %</div>
<div style="position:absolute;left:742.00px;top:390.69px;font:normal 11px/22px 'Liberation Sans', sans-serif;color:#800080;white-space:pre;letter-spacing:-0.281px;">Name:</div>
<div style="position:absolute;left:780.80px;top:390.69px;font:normal 11px/22px 'Liberation Sans', sans-serif;color:#800080;white-space:pre;letter-spacing:0.202px;">Bobst SP 162</div>
<div style="position:absolute;left:742.00px;top:406.19px;font:normal 11px/22px 'Liberation Sans', sans-serif;color:#800080;white-space:pre;letter-spacing:-0.170px;">Count:</div>
<div style="position:absolute;left:780.80px;top:406.19px;font:normal 11px/22px 'Liberation Sans', sans-serif;color:#800080;white-space:pre;letter-spacing:0.260px;">10 of 110</div>
<div style="position:absolute;left:741.50px;top:421.69px;font:normal 11px/22px 'Liberation Sans', sans-serif;color:#800080;white-space:pre;letter-spacing:-0.088px;">Waste:</div>
<div style="position:absolute;left:780.30px;top:421.69px;font:normal 11px/22px 'Liberation Sans', sans-serif;color:#800080;white-space:pre;letter-spacing:0.089px;">25.91 %</div>
<div style="position:absolute;left:193.65px;top:664.69px;font:normal 11px/22px 'Liberation Sans', sans-serif;color:#800080;white-space:pre;letter-spacing:0.234px;">Size: 1650.00, 1133.00</div>
<div style="position:absolute;left:509.75px;top:664.69px;font:normal 11px/22px 'Liberation Sans', sans-serif;color:#800080;white-space:pre;letter-spacing:0.197px;">Size: 1600.00, 1000.00</div>
<div style="position:absolute;left:834.65px;top:664.69px;font:normal 11px/22px 'Liberation Sans', sans-serif;color:#800080;white-space:pre;letter-spacing:0.234px;">Size: 1650.00, 1133.00</div>
<div style="position:absolute;left:14px;top:739px;width:1109px;height:1px;background:#8a8a8a;"></div>
<div style="position:absolute;left:14px;top:740px;width:1109px;height:1px;background:#ffffff;"></div>
<div style="position:absolute;left:806px;top:753px;width:73px;height:21px;background:#e1e7f3;border:1px solid #86869c;box-shadow:1px 1px 0 #a3a8bd"></div>
<div style="position:absolute;left:824.50px;top:751.84px;font:normal 12px/24px 'Liberation Sans', sans-serif;color:#000;white-space:pre;transform:scaleX(0.9181);transform-origin:0 0;">&lt; <u>B</u>ack</div>
<div style="position:absolute;left:887px;top:753px;width:73px;height:21px;background:#e1e7f3;border:1px solid #86869c;box-shadow:1px 1px 0 #a3a8bd"></div>
<div style="position:absolute;left:907.50px;top:751.84px;font:normal 12px/24px 'Liberation Sans', sans-serif;color:#000;white-space:pre;transform:scaleX(0.9139);transform-origin:0 0;"><u>N</u>ext &gt;</div>
<div style="position:absolute;left:968px;top:753px;width:73px;height:21px;background:#e1e7f3;border:1px solid #86869c;box-shadow:1px 1px 0 #a3a8bd"></div>
<div style="position:absolute;left:986.70px;top:751.84px;font:normal 12px/24px 'Liberation Sans', sans-serif;color:#000;white-space:pre;transform:scaleX(0.9101);transform-origin:0 0;">Cancel</div>
<div style="position:absolute;left:1049px;top:753px;width:73px;height:21px;background:#e1e7f3;border:1px solid #86869c;box-shadow:1px 1px 0 #a3a8bd"></div>
<div style="position:absolute;left:1074.20px;top:751.84px;font:normal 12px/24px 'Liberation Sans', sans-serif;color:#000;white-space:pre;transform:scaleX(0.8506);transform-origin:0 0;"><u>H</u>elp</div>
<svg style="left:1111px;top:768px" width="18" height="15" viewBox="0 0 18 15"><path d="M6 15 L18 3 M10 15 L18 7 M14 15 L18 11" stroke="#6a6a6a" stroke-width="1.1"/><g fill="#a3adbd"><rect x="1" y="9" width="1" height="1"/><rect x="5" y="9" width="1" height="1"/><rect x="9" y="9" width="1" height="1"/><rect x="1" y="13" width="1" height="1"/><rect x="5" y="13" width="1" height="1"/></g></svg>
</body></html>
